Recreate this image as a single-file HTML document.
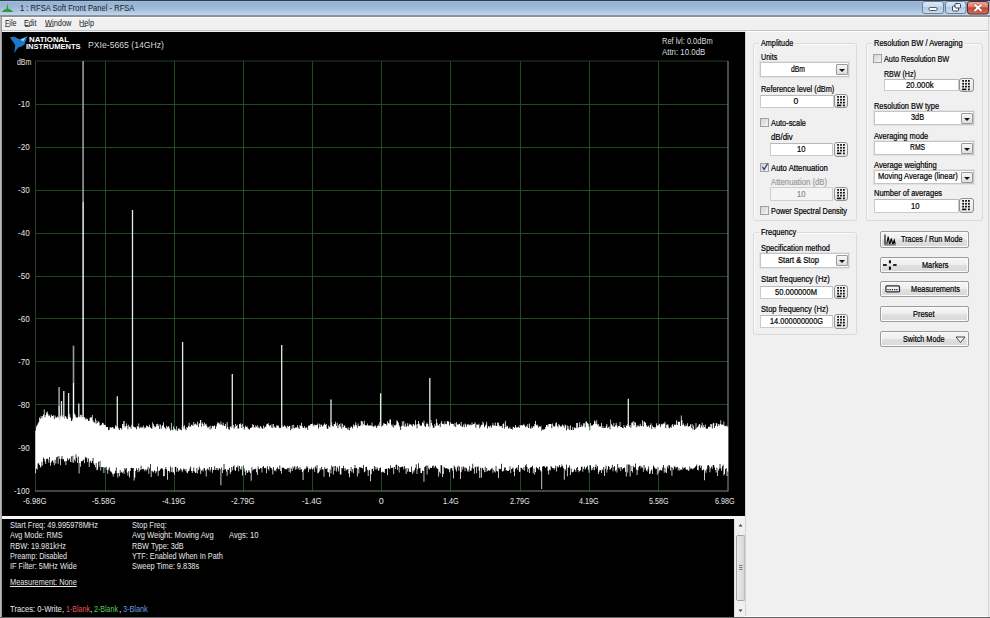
<!DOCTYPE html>
<html><head><meta charset="utf-8">
<style>
*{margin:0;padding:0;box-sizing:border-box}
html,body{width:990px;height:618px;overflow:hidden;background:#f0f0f0;font-family:"Liberation Sans",sans-serif;font-size:8px;color:#000;position:relative}
.a{position:absolute}
.t{position:absolute;white-space:pre;color:#000;transform-origin:0 0;-webkit-text-stroke:0.2px currentColor;z-index:2}
#title{left:0;top:0;width:990px;height:15px;background:linear-gradient(to bottom,#2c3c54 0px,#2c3c54 1px,#a6bcd4 1px,#a6bcd4 2px,#94b3d3 2px,#9cb8d6 7px,#afcae7 12px,#c2d6ec 15px)}
#tbord{left:0;top:15px;width:990px;height:2px;background:#8a9299}
#menu{left:0;top:17px;width:990px;height:13px;background:#f0f0f0;border-top:1px solid #fdfdfd}
#mline{left:0;top:30px;width:990px;height:1px;background:#c4c4c4}
#lframe{left:0;top:17px;width:2px;height:601px;background:linear-gradient(to right,#b8b8b8 0,#b8b8b8 1px,#9c9c9c 1px)}
#plot{left:2px;top:32px;width:743px;height:485px;background:#000}
#sep{left:2px;top:516.4px;width:743px;height:2.3px;background:#f4f4f4}
#info{left:2px;top:519px;width:732px;height:98px;background:#000}
#scroll{left:734px;top:519px;width:11px;height:98px;background:#f0f0f0;border-left:1px solid #e0e0e0}
#bot{left:0;top:617px;width:990px;height:1px;background:#646464}
#panel{left:745px;top:31px;width:243px;height:586px;background:#f0f0f0;border-left:1px solid #d4d4d4;border-top:1px solid #fff}
#rframe{left:988px;top:17px;width:2px;height:600px;background:linear-gradient(to right,#d6d6d6 0,#d6d6d6 1px,#ececec 1px)}
.grp{position:absolute;border:1px solid #dadada;border-radius:3px;box-shadow:inset 1px 1px 0 #fbfbfb}
.glbg{position:absolute;background:#f0f0f0}
.inp{position:absolute;background:#fff;border:1px solid #cbcbcb;border-top-color:#b8b8b8}
.inp.dis{background:#f4f4f4;border-color:#cfcfcf}
.dd{position:absolute;background:#fff;border:1px solid #c6c6c6;box-shadow:0 0 0 1px #e2e2e2}
.ddb{position:absolute;width:12px;height:11px;background:linear-gradient(#f6f6f6,#dedede);border:1px solid #9a9a9a;border-radius:1px}
.ddb:after{content:"";position:absolute;left:2.5px;top:4px;border-left:3px solid transparent;border-right:3px solid transparent;border-top:3px solid #111}
.kp{position:absolute;border:1px solid #909090;border-radius:3px;background:linear-gradient(#f8f8f8,#e4e4e4)}
.cb{position:absolute;width:9px;height:9px;border:1px solid #a0a0a0;background:linear-gradient(135deg,#d4d4d4,#f4f4f4)}
.btn{position:absolute;border:1px solid #9c9c9c;border-radius:2px;background:linear-gradient(#f6f6f6 0%,#eeeeee 48%,#e0e0e0 52%,#d8d8d8 100%);box-shadow:inset 0 0 0 1px #fbfbfb}
</style></head><body>
<div id="title" class="a">
 <svg class="a" style="left:1px;top:2px" width="13" height="11" viewBox="0 0 13 11"><path d="M0.5 10 L3.5 7.5 L5.5 7 L6.5 1.5 L7.5 7 L9.5 7.5 L12.5 10 Z" fill="#2e9a38"/></svg>
 <svg class="a" style="left:922px;top:1px" width="67" height="14" viewBox="0 0 67 14">
  <defs>
   <linearGradient id="bg1" x1="0" y1="0" x2="0" y2="1"><stop offset="0" stop-color="#dfe9f5"/><stop offset="0.45" stop-color="#c9d9ec"/><stop offset="0.5" stop-color="#b4c9e2"/><stop offset="1" stop-color="#cadcf0"/></linearGradient>
   <linearGradient id="bg2" x1="0" y1="0" x2="0" y2="1"><stop offset="0" stop-color="#eba89c"/><stop offset="0.45" stop-color="#de7d6c"/><stop offset="0.5" stop-color="#c8432e"/><stop offset="1" stop-color="#d6705a"/></linearGradient>
  </defs>
  <rect x="0.5" y="0.5" width="21" height="12" rx="2.5" fill="url(#bg1)" stroke="#6d8099"/>
  <rect x="7" y="6.5" width="8" height="3" rx="1.2" fill="#fff" stroke="#3a4658" stroke-width="0.9"/>
  <rect x="23.5" y="0.5" width="20.5" height="12" rx="2.5" fill="url(#bg1)" stroke="#6d8099"/>
  <rect x="30.5" y="5" width="6" height="5" rx="1" fill="#fff" stroke="#3a4658" stroke-width="1"/>
  <rect x="33" y="2.5" width="5.5" height="4.5" rx="1" fill="#e8eef6" stroke="#3a4658" stroke-width="1"/>
  <rect x="45.5" y="0.5" width="21" height="12.5" rx="2.5" fill="url(#bg2)" stroke="#5a2a22"/>
  <path d="M53 4 L59 9.5 M59 4 L53 9.5" stroke="#3a1a14" stroke-width="3" stroke-linecap="round" opacity="0.5"/>
  <path d="M53 4 L59 9.5 M59 4 L53 9.5" stroke="#fff" stroke-width="2" stroke-linecap="round"/>
 </svg>
</div>
<div id="tbord" class="a"></div>
<div id="menu" class="a"></div>
<div id="mline" class="a"></div>
<div id="lframe" class="a"></div>
<div id="plot" class="a"></div>
<svg class="a" style="left:0;top:0" width="990" height="618">
 <g stroke="#204a20" stroke-width="1" fill="none"><line x1="105.5" y1="61" x2="105.5" y2="491"/>
<line x1="174.5" y1="61" x2="174.5" y2="491"/>
<line x1="243.5" y1="61" x2="243.5" y2="491"/>
<line x1="312.5" y1="61" x2="312.5" y2="491"/>
<line x1="381.5" y1="61" x2="381.5" y2="491"/>
<line x1="450.5" y1="61" x2="450.5" y2="491"/>
<line x1="520.5" y1="61" x2="520.5" y2="491"/>
<line x1="589.5" y1="61" x2="589.5" y2="491"/>
<line x1="658.5" y1="61" x2="658.5" y2="491"/>
<line x1="35" y1="104.5" x2="728" y2="104.5"/>
<line x1="35" y1="147.5" x2="728" y2="147.5"/>
<line x1="35" y1="190.5" x2="728" y2="190.5"/>
<line x1="35" y1="233.5" x2="728" y2="233.5"/>
<line x1="35" y1="276.5" x2="728" y2="276.5"/>
<line x1="35" y1="318.5" x2="728" y2="318.5"/>
<line x1="35" y1="361.5" x2="728" y2="361.5"/>
<line x1="35" y1="404.5" x2="728" y2="404.5"/>
<line x1="35" y1="447.5" x2="728" y2="447.5"/></g>
 <path d="M35.5 491 V61 H728" stroke="#263c26" stroke-width="1" fill="none"/>
 <path d="M728 61 V491 H35" stroke="#7c8c7c" stroke-width="1.1" fill="none"/>
 <line x1="59.1" y1="387" x2="59.1" y2="406" stroke="#9a9a9a" stroke-width="1.6"/>
<line x1="59.1" y1="406" x2="59.1" y2="430" stroke="#fff" stroke-width="1.4"/>
<line x1="61.5" y1="401" x2="61.5" y2="430" stroke="#e8e8e8" stroke-width="1.3"/>
<line x1="63.8" y1="391" x2="63.8" y2="430" stroke="#e8e8e8" stroke-width="1.3"/>
<line x1="68.6" y1="393" x2="68.6" y2="430" stroke="#e8e8e8" stroke-width="1.3"/>
<line x1="73.5" y1="345.7" x2="73.5" y2="383" stroke="#9a9a9a" stroke-width="1.6"/>
<line x1="73.5" y1="383" x2="73.5" y2="430" stroke="#fff" stroke-width="1.4"/>
<line x1="78.8" y1="403.6" x2="78.8" y2="430" stroke="#e8e8e8" stroke-width="1.3"/>
<line x1="83.1" y1="61" x2="83.1" y2="202" stroke="#9a9a9a" stroke-width="1.6"/>
<line x1="83.1" y1="202" x2="83.1" y2="430" stroke="#fff" stroke-width="1.4"/>
<line x1="117.3" y1="396.3" x2="117.3" y2="430" stroke="#e8e8e8" stroke-width="1.3"/>
<line x1="124" y1="421" x2="124" y2="430" stroke="#e8e8e8" stroke-width="1.3"/>
<line x1="132.5" y1="210" x2="132.5" y2="430" stroke="#e8e8e8" stroke-width="1.3"/>
<line x1="182.6" y1="342" x2="182.6" y2="430" stroke="#e8e8e8" stroke-width="1.3"/>
<line x1="232.3" y1="374" x2="232.3" y2="430" stroke="#e8e8e8" stroke-width="1.3"/>
<line x1="281.7" y1="345" x2="281.7" y2="430" stroke="#e8e8e8" stroke-width="1.3"/>
<line x1="331" y1="399.4" x2="331" y2="430" stroke="#e8e8e8" stroke-width="1.3"/>
<line x1="361.8" y1="421" x2="361.8" y2="430" stroke="#e8e8e8" stroke-width="1.3"/>
<line x1="380.6" y1="393.3" x2="380.6" y2="430" stroke="#e8e8e8" stroke-width="1.3"/>
<line x1="429.8" y1="378" x2="429.8" y2="430" stroke="#e8e8e8" stroke-width="1.3"/>
<line x1="628.3" y1="398.7" x2="628.3" y2="430" stroke="#e8e8e8" stroke-width="1.3"/>
<line x1="200.6" y1="420" x2="200.6" y2="430" stroke="#e8e8e8" stroke-width="1.3"/>
 <path d="M35.30,430.4 36.07,430.4 36.07,426.4 36.85,426.4 36.85,425.0 37.62,425.0 37.62,423.4 38.40,423.4 38.40,422.0 39.17,422.0 39.17,417.5 39.95,417.5 39.95,418.8 40.72,418.8 40.72,416.0 41.50,416.0 41.50,417.9 42.27,417.9 42.27,416.1 43.05,416.1 43.05,414.6 43.82,414.6 43.82,409.6 44.60,409.6 44.60,417.3 45.37,417.3 45.37,415.1 46.15,415.1 46.15,412.5 46.92,412.5 46.92,411.4 47.70,411.4 47.70,413.9 48.47,413.9 48.47,416.0 49.25,416.0 49.25,415.3 50.02,415.3 50.02,417.4 50.80,417.4 50.80,414.6 51.57,414.6 51.57,415.7 52.35,415.7 52.35,416.0 53.12,416.0 53.12,415.2 53.90,415.2 53.90,418.9 54.67,418.9 54.67,415.6 55.45,415.6 55.45,417.4 56.22,417.4 56.22,417.4 57.00,417.4 57.00,416.4 57.77,416.4 57.77,417.3 58.55,417.3 58.55,418.1 59.32,418.1 59.32,419.7 60.10,419.7 60.10,415.8 60.87,415.8 60.87,417.3 61.65,417.3 61.65,416.9 62.42,416.9 62.42,415.3 63.20,415.3 63.20,417.2 63.97,417.2 63.97,418.6 64.75,418.6 64.75,416.0 65.52,416.0 65.52,416.5 66.30,416.5 66.30,418.2 67.07,418.2 67.07,419.1 67.85,419.1 67.85,415.7 68.62,415.7 68.62,417.3 69.40,417.3 69.40,414.1 70.17,414.1 70.17,417.4 70.95,417.4 70.95,421.1 71.72,421.1 71.72,420.5 72.50,420.5 72.50,418.4 73.27,418.4 73.27,419.7 74.05,419.7 74.05,413.5 74.82,413.5 74.82,414.8 75.60,414.8 75.60,416.7 76.37,416.7 76.37,417.7 77.15,417.7 77.15,417.4 77.92,417.4 77.92,416.6 78.70,416.6 78.70,416.8 79.47,416.8 79.47,417.0 80.25,417.0 80.25,414.8 81.02,414.8 81.02,415.1 81.80,415.1 81.80,417.5 82.57,417.5 82.57,417.1 83.35,417.1 83.35,416.9 84.12,416.9 84.12,417.2 84.90,417.2 84.90,419.6 85.67,419.6 85.67,418.0 86.45,418.0 86.45,419.3 87.22,419.3 87.22,419.1 88.00,419.1 88.00,420.9 88.77,420.9 88.77,420.8 89.55,420.8 89.55,418.2 90.32,418.2 90.32,417.0 91.10,417.0 91.10,417.4 91.87,417.4 91.87,414.9 92.65,414.9 92.65,420.5 93.42,420.5 93.42,422.3 94.20,422.3 94.20,422.6 94.97,422.6 94.97,418.6 95.75,418.6 95.75,423.7 96.52,423.7 96.52,420.6 97.30,420.6 97.30,423.0 98.07,423.0 98.07,421.3 98.85,421.3 98.85,422.3 99.62,422.3 99.62,425.8 100.40,425.8 100.40,424.9 101.17,424.9 101.17,424.7 101.95,424.7 101.95,423.0 102.72,423.0 102.72,422.8 103.50,422.8 103.50,424.6 104.27,424.6 104.27,424.9 105.05,424.9 105.05,424.9 105.82,424.9 105.82,427.0 106.60,427.0 106.60,427.0 107.37,427.0 107.37,426.9 108.15,426.9 108.15,430.2 108.92,430.2 108.92,429.7 109.70,429.7 109.70,426.9 110.47,426.9 110.47,427.8 111.25,427.8 111.25,427.5 112.02,427.5 112.02,426.9 112.80,426.9 112.80,427.4 113.57,427.4 113.57,428.8 114.35,428.8 114.35,428.6 115.12,428.6 115.12,425.3 115.90,425.3 115.90,426.6 116.67,426.6 116.67,426.6 117.45,426.6 117.45,426.7 118.22,426.7 118.22,428.5 119.00,428.5 119.00,429.9 119.77,429.9 119.77,428.0 120.55,428.0 120.55,427.9 121.32,427.9 121.32,429.4 122.10,429.4 122.10,423.9 122.87,423.9 122.87,423.9 123.65,423.9 123.65,426.2 124.42,426.2 124.42,427.5 125.20,427.5 125.20,426.2 125.97,426.2 125.97,423.4 126.75,423.4 126.75,425.7 127.52,425.7 127.52,429.3 128.30,429.3 128.30,424.7 129.07,424.7 129.07,426.8 129.85,426.8 129.85,426.8 130.62,426.8 130.62,428.7 131.40,428.7 131.40,424.7 132.17,424.7 132.17,427.3 132.95,427.3 132.95,426.3 133.72,426.3 133.72,426.9 134.50,426.9 134.50,427.2 135.27,427.2 135.27,427.6 136.05,427.6 136.05,429.2 136.82,429.2 136.82,426.1 137.60,426.1 137.60,427.1 138.37,427.1 138.37,423.6 139.15,423.6 139.15,428.3 139.92,428.3 139.92,426.8 140.70,426.8 140.70,428.2 141.47,428.2 141.47,426.7 142.25,426.7 142.25,427.5 143.02,427.5 143.02,425.4 143.80,425.4 143.80,428.4 144.57,428.4 144.57,427.0 145.35,427.0 145.35,427.9 146.12,427.9 146.12,425.5 146.90,425.5 146.90,425.9 147.67,425.9 147.67,426.4 148.45,426.4 148.45,427.2 149.22,427.2 149.22,424.8 150.00,424.8 150.00,427.3 150.77,427.3 150.77,428.2 151.55,428.2 151.55,428.8 152.32,428.8 152.32,422.2 153.10,422.2 153.10,424.2 153.87,424.2 153.87,425.9 154.65,425.9 154.65,427.4 155.42,427.4 155.42,426.6 156.20,426.6 156.20,424.2 156.97,424.2 156.97,423.8 157.75,423.8 157.75,425.9 158.52,425.9 158.52,424.2 159.30,424.2 159.30,429.0 160.07,429.0 160.07,424.5 160.85,424.5 160.85,428.7 161.62,428.7 161.62,426.3 162.40,426.3 162.40,425.1 163.17,425.1 163.17,422.3 163.95,422.3 163.95,426.9 164.72,426.9 164.72,427.9 165.50,427.9 165.50,429.3 166.27,429.3 166.27,425.8 167.05,425.8 167.05,427.2 167.82,427.2 167.82,426.2 168.60,426.2 168.60,426.6 169.37,426.6 169.37,428.7 170.15,428.7 170.15,430.5 170.92,430.5 170.92,423.0 171.70,423.0 171.70,430.3 172.47,430.3 172.47,429.7 173.25,429.7 173.25,426.2 174.02,426.2 174.02,428.3 174.80,428.3 174.80,429.2 175.57,429.2 175.57,430.2 176.35,430.2 176.35,426.2 177.12,426.2 177.12,431.1 177.90,431.1 177.90,429.1 178.67,429.1 178.67,428.0 179.45,428.0 179.45,429.6 180.22,429.6 180.22,429.7 181.00,429.7 181.00,430.2 181.77,430.2 181.77,426.5 182.55,426.5 182.55,428.7 183.32,428.7 183.32,426.6 184.10,426.6 184.10,425.2 184.87,425.2 184.87,428.8 185.65,428.8 185.65,430.2 186.42,430.2 186.42,427.0 187.20,427.0 187.20,427.8 187.97,427.8 187.97,426.1 188.75,426.1 188.75,422.7 189.52,422.7 189.52,427.0 190.30,427.0 190.30,426.5 191.07,426.5 191.07,424.7 191.85,424.7 191.85,424.8 192.62,424.8 192.62,425.9 193.40,425.9 193.40,422.0 194.17,422.0 194.17,424.4 194.95,424.4 194.95,423.4 195.72,423.4 195.72,424.2 196.50,424.2 196.50,425.2 197.27,425.2 197.27,421.7 198.05,421.7 198.05,427.1 198.82,427.1 198.82,423.6 199.60,423.6 199.60,423.3 200.37,423.3 200.37,423.5 201.15,423.5 201.15,426.8 201.92,426.8 201.92,422.6 202.70,422.6 202.70,424.0 203.47,424.0 203.47,426.0 204.25,426.0 204.25,422.4 205.02,422.4 205.02,424.4 205.80,424.4 205.80,423.8 206.57,423.8 206.57,426.0 207.35,426.0 207.35,427.8 208.12,427.8 208.12,427.3 208.90,427.3 208.90,426.3 209.67,426.3 209.67,429.4 210.45,429.4 210.45,425.7 211.22,425.7 211.22,428.6 212.00,428.6 212.00,425.8 212.77,425.8 212.77,426.4 213.55,426.4 213.55,426.1 214.32,426.1 214.32,425.3 215.10,425.3 215.10,428.9 215.87,428.9 215.87,426.4 216.65,426.4 216.65,424.3 217.42,424.3 217.42,422.1 218.20,422.1 218.20,423.1 218.97,423.1 218.97,423.5 219.75,423.5 219.75,424.7 220.52,424.7 220.52,421.6 221.30,421.6 221.30,424.4 222.07,424.4 222.07,425.2 222.85,425.2 222.85,422.7 223.62,422.7 223.62,425.8 224.40,425.8 224.40,425.9 225.17,425.9 225.17,424.0 225.95,424.0 225.95,428.5 226.72,428.5 226.72,422.0 227.50,422.0 227.50,426.7 228.27,426.7 228.27,429.2 229.05,429.2 229.05,429.8 229.82,429.8 229.82,426.7 230.60,426.7 230.60,426.3 231.37,426.3 231.37,427.7 232.15,427.7 232.15,428.0 232.92,428.0 232.92,424.9 233.70,424.9 233.70,428.8 234.47,428.8 234.47,427.1 235.25,427.1 235.25,424.0 236.02,424.0 236.02,426.0 236.80,426.0 236.80,424.7 237.57,424.7 237.57,428.5 238.35,428.5 238.35,428.5 239.12,428.5 239.12,424.1 239.90,424.1 239.90,423.2 240.67,423.2 240.67,424.5 241.45,424.5 241.45,428.0 242.22,428.0 242.22,423.7 243.00,423.7 243.00,426.6 243.77,426.6 243.77,429.6 244.55,429.6 244.55,427.6 245.32,427.6 245.32,425.4 246.10,425.4 246.10,427.1 246.87,427.1 246.87,426.6 247.65,426.6 247.65,428.2 248.42,428.2 248.42,429.2 249.20,429.2 249.20,429.4 249.97,429.4 249.97,428.1 250.75,428.1 250.75,427.8 251.52,427.8 251.52,427.3 252.30,427.3 252.30,424.1 253.07,424.1 253.07,425.1 253.85,425.1 253.85,427.5 254.62,427.5 254.62,427.6 255.40,427.6 255.40,425.6 256.17,425.6 256.17,426.8 256.95,426.8 256.95,425.3 257.72,425.3 257.72,428.1 258.50,428.1 258.50,426.5 259.27,426.5 259.27,428.4 260.05,428.4 260.05,426.0 260.82,426.0 260.82,426.9 261.60,426.9 261.60,428.2 262.37,428.2 262.37,428.9 263.15,428.9 263.15,425.6 263.92,425.6 263.92,428.1 264.70,428.1 264.70,426.5 265.47,426.5 265.47,426.8 266.25,426.8 266.25,424.2 267.02,424.2 267.02,424.0 267.80,424.0 267.80,423.0 268.57,423.0 268.57,425.0 269.35,425.0 269.35,426.3 270.12,426.3 270.12,425.1 270.90,425.1 270.90,427.4 271.67,427.4 271.67,424.3 272.45,424.3 272.45,427.9 273.22,427.9 273.22,424.0 274.00,424.0 274.00,426.6 274.77,426.6 274.77,427.5 275.55,427.5 275.55,427.8 276.32,427.8 276.32,425.3 277.10,425.3 277.10,425.7 277.87,425.7 277.87,425.2 278.65,425.2 278.65,427.2 279.42,427.2 279.42,428.2 280.20,428.2 280.20,427.8 280.97,427.8 280.97,428.4 281.75,428.4 281.75,425.6 282.52,425.6 282.52,426.9 283.30,426.9 283.30,426.4 284.07,426.4 284.07,425.2 284.85,425.2 284.85,426.3 285.62,426.3 285.62,426.8 286.40,426.8 286.40,428.4 287.17,428.4 287.17,425.8 287.95,425.8 287.95,426.9 288.72,426.9 288.72,425.7 289.50,425.7 289.50,425.9 290.27,425.9 290.27,430.2 291.05,430.2 291.05,428.8 291.82,428.8 291.82,424.9 292.60,424.9 292.60,428.6 293.37,428.6 293.37,424.8 294.15,424.8 294.15,428.3 294.92,428.3 294.92,427.7 295.70,427.7 295.70,427.2 296.47,427.2 296.47,427.7 297.25,427.7 297.25,425.3 298.02,425.3 298.02,427.6 298.80,427.6 298.80,428.9 299.57,428.9 299.57,425.1 300.35,425.1 300.35,426.0 301.12,426.0 301.12,422.7 301.90,422.7 301.90,426.3 302.67,426.3 302.67,427.7 303.45,427.7 303.45,427.9 304.22,427.9 304.22,426.1 305.00,426.1 305.00,428.3 305.77,428.3 305.77,427.2 306.55,427.2 306.55,427.6 307.32,427.6 307.32,429.8 308.10,429.8 308.10,425.4 308.87,425.4 308.87,425.7 309.65,425.7 309.65,425.2 310.42,425.2 310.42,424.0 311.20,424.0 311.20,423.9 311.97,423.9 311.97,423.6 312.75,423.6 312.75,424.8 313.52,424.8 313.52,426.5 314.30,426.5 314.30,424.6 315.07,424.6 315.07,425.0 315.85,425.0 315.85,425.3 316.62,425.3 316.62,424.7 317.40,424.7 317.40,423.5 318.17,423.5 318.17,428.4 318.95,428.4 318.95,423.7 319.72,423.7 319.72,427.0 320.50,427.0 320.50,424.4 321.27,424.4 321.27,424.7 322.05,424.7 322.05,426.8 322.82,426.8 322.82,425.5 323.60,425.5 323.60,424.6 324.37,424.6 324.37,423.3 325.15,423.3 325.15,424.7 325.92,424.7 325.92,424.1 326.70,424.1 326.70,428.4 327.47,428.4 327.47,429.1 328.25,429.1 328.25,425.6 329.02,425.6 329.02,426.7 329.80,426.7 329.80,427.5 330.57,427.5 330.57,424.9 331.35,424.9 331.35,422.3 332.12,422.3 332.12,426.0 332.90,426.0 332.90,426.5 333.67,426.5 333.67,424.1 334.45,424.1 334.45,424.3 335.22,424.3 335.22,421.7 336.00,421.7 336.00,425.8 336.77,425.8 336.77,422.8 337.55,422.8 337.55,428.2 338.32,428.2 338.32,425.2 339.10,425.2 339.10,424.0 339.87,424.0 339.87,427.1 340.65,427.1 340.65,423.3 341.42,423.3 341.42,428.7 342.20,428.7 342.20,423.7 342.97,423.7 342.97,427.3 343.75,427.3 343.75,425.0 344.52,425.0 344.52,426.0 345.30,426.0 345.30,428.0 346.07,428.0 346.07,427.8 346.85,427.8 346.85,428.4 347.62,428.4 347.62,429.7 348.40,429.7 348.40,427.2 349.17,427.2 349.17,430.3 349.95,430.3 349.95,427.8 350.72,427.8 350.72,426.2 351.50,426.2 351.50,427.0 352.27,427.0 352.27,428.6 353.05,428.6 353.05,424.6 353.82,424.6 353.82,426.6 354.60,426.6 354.60,425.1 355.37,425.1 355.37,422.2 356.15,422.2 356.15,425.3 356.92,425.3 356.92,427.8 357.70,427.8 357.70,423.5 358.47,423.5 358.47,425.9 359.25,425.9 359.25,426.2 360.02,426.2 360.02,425.5 360.80,425.5 360.80,420.9 361.57,420.9 361.57,425.8 362.35,425.8 362.35,422.2 363.12,422.2 363.12,424.3 363.90,424.3 363.90,420.8 364.67,420.8 364.67,424.9 365.45,424.9 365.45,425.6 366.22,425.6 366.22,425.2 367.00,425.2 367.00,423.6 367.77,423.6 367.77,425.8 368.55,425.8 368.55,425.2 369.32,425.2 369.32,425.7 370.10,425.7 370.10,425.3 370.87,425.3 370.87,425.8 371.65,425.8 371.65,422.5 372.42,422.5 372.42,426.3 373.20,426.3 373.20,426.8 373.97,426.8 373.97,426.3 374.75,426.3 374.75,424.9 375.52,424.9 375.52,426.4 376.30,426.4 376.30,427.9 377.07,427.9 377.07,425.9 377.85,425.9 377.85,424.4 378.62,424.4 378.62,426.1 379.40,426.1 379.40,422.3 380.17,422.3 380.17,425.9 380.95,425.9 380.95,427.0 381.72,427.0 381.72,425.7 382.50,425.7 382.50,425.6 383.27,425.6 383.27,423.3 384.05,423.3 384.05,423.6 384.82,423.6 384.82,423.9 385.60,423.9 385.60,423.9 386.37,423.9 386.37,425.6 387.15,425.6 387.15,421.3 387.92,421.3 387.92,423.1 388.70,423.1 388.70,423.4 389.47,423.4 389.47,419.4 390.25,419.4 390.25,419.5 391.02,419.5 391.02,424.8 391.80,424.8 391.80,426.7 392.57,426.7 392.57,424.4 393.35,424.4 393.35,427.6 394.12,427.6 394.12,425.0 394.90,425.0 394.90,425.8 395.67,425.8 395.67,424.5 396.45,424.5 396.45,420.3 397.22,420.3 397.22,421.2 398.00,421.2 398.00,422.6 398.77,422.6 398.77,425.2 399.55,425.2 399.55,426.9 400.32,426.9 400.32,430.1 401.10,430.1 401.10,425.9 401.87,425.9 401.87,421.4 402.65,421.4 402.65,425.8 403.42,425.8 403.42,421.0 404.20,421.0 404.20,426.6 404.97,426.6 404.97,423.5 405.75,423.5 405.75,426.7 406.52,426.7 406.52,426.2 407.30,426.2 407.30,423.3 408.07,423.3 408.07,426.2 408.85,426.2 408.85,423.8 409.62,423.8 409.62,425.1 410.40,425.1 410.40,424.0 411.17,424.0 411.17,425.2 411.95,425.2 411.95,426.6 412.72,426.6 412.72,423.9 413.50,423.9 413.50,424.6 414.27,424.6 414.27,425.6 415.05,425.6 415.05,420.2 415.82,420.2 415.82,424.5 416.60,424.5 416.60,428.2 417.37,428.2 417.37,423.9 418.15,423.9 418.15,421.1 418.92,421.1 418.92,423.7 419.70,423.7 419.70,425.3 420.47,425.3 420.47,426.1 421.25,426.1 421.25,425.5 422.02,425.5 422.02,422.3 422.80,422.3 422.80,423.3 423.57,423.3 423.57,420.4 424.35,420.4 424.35,426.0 425.12,426.0 425.12,427.0 425.90,427.0 425.90,424.2 426.67,424.2 426.67,422.5 427.45,422.5 427.45,424.0 428.22,424.0 428.22,426.4 429.00,426.4 429.00,428.7 429.77,428.7 429.77,426.6 430.55,426.6 430.55,420.1 431.32,420.1 431.32,422.9 432.10,422.9 432.10,425.5 432.87,425.5 432.87,428.0 433.65,428.0 433.65,427.6 434.42,427.6 434.42,424.1 435.20,424.1 435.20,425.9 435.97,425.9 435.97,419.0 436.75,419.0 436.75,423.1 437.52,423.1 437.52,425.2 438.30,425.2 438.30,425.4 439.07,425.4 439.07,423.9 439.85,423.9 439.85,426.9 440.62,426.9 440.62,422.7 441.40,422.7 441.40,420.8 442.17,420.8 442.17,424.1 442.95,424.1 442.95,423.8 443.72,423.8 443.72,424.6 444.50,424.6 444.50,421.6 445.27,421.6 445.27,424.0 446.05,424.0 446.05,424.2 446.82,424.2 446.82,421.2 447.60,421.2 447.60,421.1 448.37,421.1 448.37,421.8 449.15,421.8 449.15,425.5 449.92,425.5 449.92,422.2 450.70,422.2 450.70,423.4 451.47,423.4 451.47,424.0 452.25,424.0 452.25,423.7 453.02,423.7 453.02,423.9 453.80,423.9 453.80,426.3 454.57,426.3 454.57,422.9 455.35,422.9 455.35,427.1 456.12,427.1 456.12,422.3 456.90,422.3 456.90,424.2 457.67,424.2 457.67,424.9 458.45,424.9 458.45,424.0 459.22,424.0 459.22,423.8 460.00,423.8 460.00,425.8 460.77,425.8 460.77,422.0 461.55,422.0 461.55,426.5 462.32,426.5 462.32,426.8 463.10,426.8 463.10,424.6 463.87,424.6 463.87,427.3 464.65,427.3 464.65,423.5 465.42,423.5 465.42,424.6 466.20,424.6 466.20,426.7 466.97,426.7 466.97,424.2 467.75,424.2 467.75,425.1 468.52,425.1 468.52,423.9 469.30,423.9 469.30,425.5 470.07,425.5 470.07,424.6 470.85,424.6 470.85,425.2 471.62,425.2 471.62,422.6 472.40,422.6 472.40,424.8 473.17,424.8 473.17,423.9 473.95,423.9 473.95,423.8 474.72,423.8 474.72,422.2 475.50,422.2 475.50,427.7 476.27,427.7 476.27,424.5 477.05,424.5 477.05,424.6 477.82,424.6 477.82,425.1 478.60,425.1 478.60,423.8 479.37,423.8 479.37,428.2 480.15,428.2 480.15,426.6 480.92,426.6 480.92,424.8 481.70,424.8 481.70,424.9 482.47,424.9 482.47,421.4 483.25,421.4 483.25,423.3 484.02,423.3 484.02,427.3 484.80,427.3 484.80,425.8 485.57,425.8 485.57,424.5 486.35,424.5 486.35,421.7 487.12,421.7 487.12,428.6 487.90,428.6 487.90,426.3 488.67,426.3 488.67,425.9 489.45,425.9 489.45,427.4 490.22,427.4 490.22,425.5 491.00,425.5 491.00,427.5 491.77,427.5 491.77,425.2 492.55,425.2 492.55,422.9 493.32,422.9 493.32,425.6 494.10,425.6 494.10,425.5 494.87,425.5 494.87,422.4 495.65,422.4 495.65,426.1 496.42,426.1 496.42,426.1 497.20,426.1 497.20,422.4 497.97,422.4 497.97,422.7 498.75,422.7 498.75,424.9 499.52,424.9 499.52,426.8 500.30,426.8 500.30,425.9 501.07,425.9 501.07,425.9 501.85,425.9 501.85,427.9 502.62,427.9 502.62,424.1 503.40,424.1 503.40,423.3 504.17,423.3 504.17,428.6 504.95,428.6 504.95,420.8 505.72,420.8 505.72,426.9 506.50,426.9 506.50,425.5 507.27,425.5 507.27,426.2 508.05,426.2 508.05,428.5 508.82,428.5 508.82,428.3 509.60,428.3 509.60,426.7 510.37,426.7 510.37,429.1 511.15,429.1 511.15,428.7 511.92,428.7 511.92,429.4 512.70,429.4 512.70,426.7 513.47,426.7 513.47,427.1 514.25,427.1 514.25,428.1 515.02,428.1 515.02,425.0 515.80,425.0 515.80,426.9 516.57,426.9 516.57,428.0 517.35,428.0 517.35,427.0 518.12,427.0 518.12,426.4 518.90,426.4 518.90,428.1 519.67,428.1 519.67,425.1 520.45,425.1 520.45,425.8 521.22,425.8 521.22,424.9 522.00,424.9 522.00,425.5 522.77,425.5 522.77,425.1 523.55,425.1 523.55,423.7 524.32,423.7 524.32,425.4 525.10,425.4 525.10,427.2 525.87,427.2 525.87,425.8 526.65,425.8 526.65,426.8 527.42,426.8 527.42,424.0 528.20,424.0 528.20,428.0 528.97,428.0 528.97,423.6 529.75,423.6 529.75,428.0 530.52,428.0 530.52,429.0 531.30,429.0 531.30,426.5 532.07,426.5 532.07,428.1 532.85,428.1 532.85,426.2 533.62,426.2 533.62,426.5 534.40,426.5 534.40,424.1 535.17,424.1 535.17,420.9 535.95,420.9 535.95,425.2 536.72,425.2 536.72,424.5 537.50,424.5 537.50,425.7 538.27,425.7 538.27,427.7 539.05,427.7 539.05,426.2 539.82,426.2 539.82,427.0 540.60,427.0 540.60,425.9 541.37,425.9 541.37,430.7 542.15,430.7 542.15,429.6 542.92,429.6 542.92,429.4 543.70,429.4 543.70,429.4 544.47,429.4 544.47,429.0 545.25,429.0 545.25,426.9 546.02,426.9 546.02,425.1 546.80,425.1 546.80,425.1 547.57,425.1 547.57,426.6 548.35,426.6 548.35,424.0 549.12,424.0 549.12,424.1 549.90,424.1 549.90,424.1 550.67,424.1 550.67,424.1 551.45,424.1 551.45,428.2 552.22,428.2 552.22,423.4 553.00,423.4 553.00,425.8 553.77,425.8 553.77,426.7 554.55,426.7 554.55,426.3 555.32,426.3 555.32,423.3 556.10,423.3 556.10,422.3 556.87,422.3 556.87,425.8 557.65,425.8 557.65,427.5 558.42,427.5 558.42,424.1 559.20,424.1 559.20,425.3 559.97,425.3 559.97,426.2 560.75,426.2 560.75,426.9 561.52,426.9 561.52,425.4 562.30,425.4 562.30,424.5 563.07,424.5 563.07,425.8 563.85,425.8 563.85,427.8 564.62,427.8 564.62,424.6 565.40,424.6 565.40,425.3 566.17,425.3 566.17,430.6 566.95,430.6 566.95,425.6 567.72,425.6 567.72,428.9 568.50,428.9 568.50,426.3 569.27,426.3 569.27,430.1 570.05,430.1 570.05,425.6 570.82,425.6 570.82,430.0 571.60,430.0 571.60,430.1 572.37,430.1 572.37,427.0 573.15,427.0 573.15,430.0 573.92,430.0 573.92,427.7 574.70,427.7 574.70,427.6 575.47,427.6 575.47,428.6 576.25,428.6 576.25,423.1 577.02,423.1 577.02,423.0 577.80,423.0 577.80,427.9 578.57,427.9 578.57,426.9 579.35,426.9 579.35,422.3 580.12,422.3 580.12,427.1 580.90,427.1 580.90,424.8 581.67,424.8 581.67,427.1 582.45,427.1 582.45,425.7 583.22,425.7 583.22,423.3 584.00,423.3 584.00,423.3 584.77,423.3 584.77,427.3 585.55,427.3 585.55,421.6 586.32,421.6 586.32,421.5 587.10,421.5 587.10,423.0 587.87,423.0 587.87,423.9 588.65,423.9 588.65,426.4 589.42,426.4 589.42,430.3 590.20,430.3 590.20,423.0 590.97,423.0 590.97,425.5 591.75,425.5 591.75,425.8 592.52,425.8 592.52,425.1 593.30,425.1 593.30,423.9 594.07,423.9 594.07,420.4 594.85,420.4 594.85,421.5 595.62,421.5 595.62,424.1 596.40,424.1 596.40,420.3 597.17,420.3 597.17,424.8 597.95,424.8 597.95,424.1 598.72,424.1 598.72,426.5 599.50,426.5 599.50,426.2 600.27,426.2 600.27,426.4 601.05,426.4 601.05,423.0 601.82,423.0 601.82,427.9 602.60,427.9 602.60,425.9 603.37,425.9 603.37,428.0 604.15,428.0 604.15,427.8 604.92,427.8 604.92,427.9 605.70,427.9 605.70,426.0 606.47,426.0 606.47,424.0 607.25,424.0 607.25,428.1 608.02,428.1 608.02,427.2 608.80,427.2 608.80,426.6 609.57,426.6 609.57,429.2 610.35,429.2 610.35,419.5 611.12,419.5 611.12,424.3 611.90,424.3 611.90,425.4 612.67,425.4 612.67,426.4 613.45,426.4 613.45,423.0 614.22,423.0 614.22,427.0 615.00,427.0 615.00,425.6 615.77,425.6 615.77,422.7 616.55,422.7 616.55,425.3 617.32,425.3 617.32,427.4 618.10,427.4 618.10,426.1 618.87,426.1 618.87,426.1 619.65,426.1 619.65,422.0 620.42,422.0 620.42,427.0 621.20,427.0 621.20,426.9 621.97,426.9 621.97,428.1 622.75,428.1 622.75,428.3 623.52,428.3 623.52,424.9 624.30,424.9 624.30,427.1 625.07,427.1 625.07,427.7 625.85,427.7 625.85,425.2 626.62,425.2 626.62,426.0 627.40,426.0 627.40,424.1 628.17,424.1 628.17,425.8 628.95,425.8 628.95,426.7 629.72,426.7 629.72,425.1 630.50,425.1 630.50,427.7 631.27,427.7 631.27,422.8 632.05,422.8 632.05,422.4 632.82,422.4 632.82,421.1 633.60,421.1 633.60,425.5 634.37,425.5 634.37,422.1 635.15,422.1 635.15,422.6 635.92,422.6 635.92,427.2 636.70,427.2 636.70,425.0 637.47,425.0 637.47,426.4 638.25,426.4 638.25,425.4 639.02,425.4 639.02,426.6 639.80,426.6 639.80,423.8 640.57,423.8 640.57,425.8 641.35,425.8 641.35,426.3 642.12,426.3 642.12,420.3 642.90,420.3 642.90,426.5 643.67,426.5 643.67,421.2 644.45,421.2 644.45,421.9 645.22,421.9 645.22,422.8 646.00,422.8 646.00,424.9 646.77,424.9 646.77,427.1 647.55,427.1 647.55,426.3 648.32,426.3 648.32,425.5 649.10,425.5 649.10,427.5 649.87,427.5 649.87,425.1 650.65,425.1 650.65,423.3 651.42,423.3 651.42,428.9 652.20,428.9 652.20,425.5 652.97,425.5 652.97,427.3 653.75,427.3 653.75,426.9 654.52,426.9 654.52,428.4 655.30,428.4 655.30,427.0 656.07,427.0 656.07,423.2 656.85,423.2 656.85,425.4 657.62,425.4 657.62,425.6 658.40,425.6 658.40,424.7 659.17,424.7 659.17,423.7 659.95,423.7 659.95,427.1 660.72,427.1 660.72,424.6 661.50,424.6 661.50,423.7 662.27,423.7 662.27,424.5 663.05,424.5 663.05,423.5 663.82,423.5 663.82,423.5 664.60,423.5 664.60,421.7 665.37,421.7 665.37,428.0 666.15,428.0 666.15,424.7 666.92,424.7 666.92,424.5 667.70,424.5 667.70,424.5 668.47,424.5 668.47,427.6 669.25,427.6 669.25,428.3 670.02,428.3 670.02,426.7 670.80,426.7 670.80,427.9 671.57,427.9 671.57,425.3 672.35,425.3 672.35,423.9 673.12,423.9 673.12,426.4 673.90,426.4 673.90,424.6 674.67,424.6 674.67,425.1 675.45,425.1 675.45,424.4 676.22,424.4 676.22,420.2 677.00,420.2 677.00,425.0 677.77,425.0 677.77,421.4 678.55,421.4 678.55,422.1 679.32,422.1 679.32,421.7 680.10,421.7 680.10,426.1 680.87,426.1 680.87,415.5 681.65,415.5 681.65,420.2 682.42,420.2 682.42,424.9 683.20,424.9 683.20,423.6 683.97,423.6 683.97,425.8 684.75,425.8 684.75,426.4 685.52,426.4 685.52,424.4 686.30,424.4 686.30,426.1 687.07,426.1 687.07,423.2 687.85,423.2 687.85,426.7 688.62,426.7 688.62,426.3 689.40,426.3 689.40,426.0 690.17,426.0 690.17,424.3 690.95,424.3 690.95,428.1 691.72,428.1 691.72,423.9 692.50,423.9 692.50,429.4 693.27,429.4 693.27,425.6 694.05,425.6 694.05,430.1 694.82,430.1 694.82,429.0 695.60,429.0 695.60,423.1 696.37,423.1 696.37,428.3 697.15,428.3 697.15,427.1 697.92,427.1 697.92,426.2 698.70,426.2 698.70,424.6 699.47,424.6 699.47,424.1 700.25,424.1 700.25,427.7 701.02,427.7 701.02,425.4 701.80,425.4 701.80,422.5 702.57,422.5 702.57,427.4 703.35,427.4 703.35,425.0 704.12,425.0 704.12,427.0 704.90,427.0 704.90,424.4 705.67,424.4 705.67,428.3 706.45,428.3 706.45,429.0 707.22,429.0 707.22,428.6 708.00,428.6 708.00,427.0 708.77,427.0 708.77,426.4 709.55,426.4 709.55,427.3 710.32,427.3 710.32,423.9 711.10,423.9 711.10,424.2 711.87,424.2 711.87,428.6 712.65,428.6 712.65,423.5 713.42,423.5 713.42,422.8 714.20,422.8 714.20,427.9 714.97,427.9 714.97,426.1 715.75,426.1 715.75,422.9 716.52,422.9 716.52,423.6 717.30,423.6 717.30,426.6 718.07,426.6 718.07,423.9 718.85,423.9 718.85,425.4 719.62,425.4 719.62,424.0 720.40,424.0 720.40,420.3 721.17,420.3 721.17,424.7 721.95,424.7 721.95,424.3 722.72,424.3 722.72,425.1 723.50,425.1 723.50,421.5 724.27,421.5 724.27,426.1 725.05,426.1 725.05,426.2 725.82,426.2 725.82,425.3 726.60,425.3 726.60,426.5 727.37,426.5 727.37,426.4 728.15,426.4 728.15,471.4 727.37,471.4 727.37,475.9 726.60,475.9 726.60,467.9 725.82,467.9 725.82,469.0 725.05,469.0 725.05,474.1 724.27,474.1 724.27,475.5 723.50,475.5 723.50,464.7 722.72,464.7 722.72,466.5 721.95,466.5 721.95,470.7 721.17,470.7 721.17,468.5 720.40,468.5 720.40,464.1 719.62,464.1 719.62,468.4 718.85,468.4 718.85,470.6 718.07,470.6 718.07,475.9 717.30,475.9 717.30,467.8 716.52,467.8 716.52,472.5 715.75,472.5 715.75,470.1 714.97,470.1 714.97,467.5 714.20,467.5 714.20,464.9 713.42,464.9 713.42,465.2 712.65,465.2 712.65,468.8 711.87,468.8 711.87,466.5 711.10,466.5 711.10,468.3 710.32,468.3 710.32,472.3 709.55,472.3 709.55,466.4 708.77,466.4 708.77,465.0 708.00,465.0 708.00,465.5 707.22,465.5 707.22,468.9 706.45,468.9 706.45,472.7 705.67,472.7 705.67,470.5 704.90,470.5 704.90,480.2 704.12,480.2 704.12,469.3 703.35,469.3 703.35,469.9 702.57,469.9 702.57,470.6 701.80,470.6 701.80,465.7 701.02,465.7 701.02,468.1 700.25,468.1 700.25,465.2 699.47,465.2 699.47,465.8 698.70,465.8 698.70,470.2 697.92,470.2 697.92,470.1 697.15,470.1 697.15,464.4 696.37,464.4 696.37,466.0 695.60,466.0 695.60,467.1 694.82,467.1 694.82,468.0 694.05,468.0 694.05,468.2 693.27,468.2 693.27,469.4 692.50,469.4 692.50,468.6 691.72,468.6 691.72,468.6 690.95,468.6 690.95,468.8 690.17,468.8 690.17,466.4 689.40,466.4 689.40,470.6 688.62,470.6 688.62,470.8 687.85,470.8 687.85,469.6 687.07,469.6 687.07,469.7 686.30,469.7 686.30,469.3 685.52,469.3 685.52,467.1 684.75,467.1 684.75,467.9 683.97,467.9 683.97,468.5 683.20,468.5 683.20,466.9 682.42,466.9 682.42,470.0 681.65,470.0 681.65,469.3 680.87,469.3 680.87,469.8 680.10,469.8 680.10,470.6 679.32,470.6 679.32,468.2 678.55,468.2 678.55,470.4 677.77,470.4 677.77,466.7 677.00,466.7 677.00,467.2 676.22,467.2 676.22,468.4 675.45,468.4 675.45,466.4 674.67,466.4 674.67,466.4 673.90,466.4 673.90,469.7 673.12,469.7 673.12,467.8 672.35,467.8 672.35,475.7 671.57,475.7 671.57,467.0 670.80,467.0 670.80,470.4 670.02,470.4 670.02,465.4 669.25,465.4 669.25,465.1 668.47,465.1 668.47,468.3 667.70,468.3 667.70,466.3 666.92,466.3 666.92,472.9 666.15,472.9 666.15,472.3 665.37,472.3 665.37,467.7 664.60,467.7 664.60,472.7 663.82,472.7 663.82,465.0 663.05,465.0 663.05,467.5 662.27,467.5 662.27,470.7 661.50,470.7 661.50,470.2 660.72,470.2 660.72,469.7 659.95,469.7 659.95,470.5 659.17,470.5 659.17,472.7 658.40,472.7 658.40,467.1 657.62,467.1 657.62,474.7 656.85,474.7 656.85,468.7 656.07,468.7 656.07,469.3 655.30,469.3 655.30,468.1 654.52,468.1 654.52,466.8 653.75,466.8 653.75,465.6 652.97,465.6 652.97,474.0 652.20,474.0 652.20,469.3 651.42,469.3 651.42,470.7 650.65,470.7 650.65,473.6 649.87,473.6 649.87,474.1 649.10,474.1 649.10,466.5 648.32,466.5 648.32,469.2 647.55,469.2 647.55,471.4 646.77,471.4 646.77,470.4 646.00,470.4 646.00,467.4 645.22,467.4 645.22,469.4 644.45,469.4 644.45,465.1 643.67,465.1 643.67,471.7 642.90,471.7 642.90,467.8 642.12,467.8 642.12,466.6 641.35,466.6 641.35,468.2 640.57,468.2 640.57,465.8 639.80,465.8 639.80,466.1 639.02,466.1 639.02,467.2 638.25,467.2 638.25,470.3 637.47,470.3 637.47,474.9 636.70,474.9 636.70,469.6 635.92,469.6 635.92,463.6 635.15,463.6 635.15,467.3 634.37,467.3 634.37,467.5 633.60,467.5 633.60,465.8 632.82,465.8 632.82,472.6 632.05,472.6 632.05,471.0 631.27,471.0 631.27,465.7 630.50,465.7 630.50,476.5 629.72,476.5 629.72,464.6 628.95,464.6 628.95,464.4 628.17,464.4 628.17,472.4 627.40,472.4 627.40,464.5 626.62,464.5 626.62,476.4 625.85,476.4 625.85,471.7 625.07,471.7 625.07,467.6 624.30,467.6 624.30,468.0 623.52,468.0 623.52,468.3 622.75,468.3 622.75,469.3 621.97,469.3 621.97,466.9 621.20,466.9 621.20,471.0 620.42,471.0 620.42,467.1 619.65,467.1 619.65,468.8 618.87,468.8 618.87,467.7 618.10,467.7 618.10,464.1 617.32,464.1 617.32,472.5 616.55,472.5 616.55,469.7 615.77,469.7 615.77,471.2 615.00,471.2 615.00,466.0 614.22,466.0 614.22,467.0 613.45,467.0 613.45,471.2 612.67,471.2 612.67,464.8 611.90,464.8 611.90,467.7 611.12,467.7 611.12,469.1 610.35,469.1 610.35,469.8 609.57,469.8 609.57,466.9 608.80,466.9 608.80,465.9 608.02,465.9 608.02,469.5 607.25,469.5 607.25,472.6 606.47,472.6 606.47,465.5 605.70,465.5 605.70,468.8 604.92,468.8 604.92,476.0 604.15,476.0 604.15,467.1 603.37,467.1 603.37,470.5 602.60,470.5 602.60,469.3 601.82,469.3 601.82,472.9 601.05,472.9 601.05,470.2 600.27,470.2 600.27,470.1 599.50,470.1 599.50,471.7 598.72,471.7 598.72,474.1 597.95,474.1 597.95,466.1 597.17,466.1 597.17,468.4 596.40,468.4 596.40,464.5 595.62,464.5 595.62,466.9 594.85,466.9 594.85,470.2 594.07,470.2 594.07,466.8 593.30,466.8 593.30,470.0 592.52,470.0 592.52,468.0 591.75,468.0 591.75,470.2 590.97,470.2 590.97,465.6 590.20,465.6 590.20,465.0 589.42,465.0 589.42,472.8 588.65,472.8 588.65,469.6 587.87,469.6 587.87,465.7 587.10,465.7 587.10,467.1 586.32,467.1 586.32,468.2 585.55,468.2 585.55,469.6 584.77,469.6 584.77,466.5 584.00,466.5 584.00,468.8 583.22,468.8 583.22,471.7 582.45,471.7 582.45,466.6 581.67,466.6 581.67,467.1 580.90,467.1 580.90,470.3 580.12,470.3 580.12,470.9 579.35,470.9 579.35,472.2 578.57,472.2 578.57,469.9 577.80,469.9 577.80,467.1 577.02,467.1 577.02,468.0 576.25,468.0 576.25,471.7 575.47,471.7 575.47,470.0 574.70,470.0 574.70,469.0 573.92,469.0 573.92,471.4 573.15,471.4 573.15,472.2 572.37,472.2 572.37,472.2 571.60,472.2 571.60,468.6 570.82,468.6 570.82,474.9 570.05,474.9 570.05,465.4 569.27,465.4 569.27,467.6 568.50,467.6 568.50,467.8 567.72,467.8 567.72,476.2 566.95,476.2 566.95,464.6 566.17,464.6 566.17,470.5 565.40,470.5 565.40,469.0 564.62,469.0 564.62,479.8 563.85,479.8 563.85,468.0 563.07,468.0 563.07,466.3 562.30,466.3 562.30,464.4 561.52,464.4 561.52,466.7 560.75,466.7 560.75,467.6 559.97,467.6 559.97,464.9 559.20,464.9 559.20,466.8 558.42,466.8 558.42,467.8 557.65,467.8 557.65,466.3 556.87,466.3 556.87,471.5 556.10,471.5 556.10,465.7 555.32,465.7 555.32,468.3 554.55,468.3 554.55,469.7 553.77,469.7 553.77,467.9 553.00,467.9 553.00,468.2 552.22,468.2 552.22,467.3 551.45,467.3 551.45,466.0 550.67,466.0 550.67,470.6 549.90,470.6 549.90,469.7 549.12,469.7 549.12,474.4 548.35,474.4 548.35,470.7 547.57,470.7 547.57,466.6 546.80,466.6 546.80,466.4 546.02,466.4 546.02,468.1 545.25,468.1 545.25,466.7 544.47,466.7 544.47,465.9 543.70,465.9 543.70,466.3 542.92,466.3 542.92,466.7 542.15,466.7 542.15,489.0 541.37,489.0 541.37,471.6 540.60,471.6 540.60,470.0 539.82,470.0 539.82,466.7 539.05,466.7 539.05,469.6 538.27,469.6 538.27,468.2 537.50,468.2 537.50,468.3 536.72,468.3 536.72,466.9 535.95,466.9 535.95,472.1 535.17,472.1 535.17,474.6 534.40,474.6 534.40,468.4 533.62,468.4 533.62,473.3 532.85,473.3 532.85,465.8 532.07,465.8 532.07,466.9 531.30,466.9 531.30,466.9 530.52,466.9 530.52,468.1 529.75,468.1 529.75,472.9 528.97,472.9 528.97,468.7 528.20,468.7 528.20,472.0 527.42,472.0 527.42,466.9 526.65,466.9 526.65,464.2 525.87,464.2 525.87,465.5 525.10,465.5 525.10,470.7 524.32,470.7 524.32,467.0 523.55,467.0 523.55,470.1 522.77,470.1 522.77,468.8 522.00,468.8 522.00,467.9 521.22,467.9 521.22,467.6 520.45,467.6 520.45,471.5 519.67,471.5 519.67,472.1 518.90,472.1 518.90,465.0 518.12,465.0 518.12,469.7 517.35,469.7 517.35,467.2 516.57,467.2 516.57,468.1 515.80,468.1 515.80,469.0 515.02,469.0 515.02,476.3 514.25,476.3 514.25,471.7 513.47,471.7 513.47,467.6 512.70,467.6 512.70,468.4 511.92,468.4 511.92,468.9 511.15,468.9 511.15,473.0 510.37,473.0 510.37,466.3 509.60,466.3 509.60,470.1 508.82,470.1 508.82,471.1 508.05,471.1 508.05,471.1 507.27,471.1 507.27,470.3 506.50,470.3 506.50,470.5 505.72,470.5 505.72,467.5 504.95,467.5 504.95,467.4 504.17,467.4 504.17,470.4 503.40,470.4 503.40,471.6 502.62,471.6 502.62,471.2 501.85,471.2 501.85,463.8 501.07,463.8 501.07,469.1 500.30,469.1 500.30,469.3 499.52,469.3 499.52,468.4 498.75,468.4 498.75,478.1 497.97,478.1 497.97,471.6 497.20,471.6 497.20,471.0 496.42,471.0 496.42,465.9 495.65,465.9 495.65,472.4 494.87,472.4 494.87,471.5 494.10,471.5 494.10,469.8 493.32,469.8 493.32,472.7 492.55,472.7 492.55,468.1 491.77,468.1 491.77,468.7 491.00,468.7 491.00,469.6 490.22,469.6 490.22,470.4 489.45,470.4 489.45,471.1 488.67,471.1 488.67,470.0 487.90,470.0 487.90,471.3 487.12,471.3 487.12,467.9 486.35,467.9 486.35,471.7 485.57,471.7 485.57,466.7 484.80,466.7 484.80,472.2 484.02,472.2 484.02,470.0 483.25,470.0 483.25,468.3 482.47,468.3 482.47,467.7 481.70,467.7 481.70,477.8 480.92,477.8 480.92,467.7 480.15,467.7 480.15,477.9 479.37,477.9 479.37,470.8 478.60,470.8 478.60,466.2 477.82,466.2 477.82,466.9 477.05,466.9 477.05,473.3 476.27,473.3 476.27,466.5 475.50,466.5 475.50,467.3 474.72,467.3 474.72,473.8 473.95,473.8 473.95,468.7 473.17,468.7 473.17,463.7 472.40,463.7 472.40,468.0 471.62,468.0 471.62,470.6 470.85,470.6 470.85,471.0 470.07,471.0 470.07,466.2 469.30,466.2 469.30,471.8 468.52,471.8 468.52,469.8 467.75,469.8 467.75,471.4 466.97,471.4 466.97,468.3 466.20,468.3 466.20,467.4 465.42,467.4 465.42,471.2 464.65,471.2 464.65,467.6 463.87,467.6 463.87,466.4 463.10,466.4 463.10,469.4 462.32,469.4 462.32,466.8 461.55,466.8 461.55,471.9 460.77,471.9 460.77,479.1 460.00,479.1 460.00,466.5 459.22,466.5 459.22,470.8 458.45,470.8 458.45,465.7 457.67,465.7 457.67,467.2 456.90,467.2 456.90,471.4 456.12,471.4 456.12,469.5 455.35,469.5 455.35,467.3 454.57,467.3 454.57,465.6 453.80,465.6 453.80,478.6 453.02,478.6 453.02,470.7 452.25,470.7 452.25,467.9 451.47,467.9 451.47,468.3 450.70,468.3 450.70,468.7 449.92,468.7 449.92,472.2 449.15,472.2 449.15,469.6 448.37,469.6 448.37,468.4 447.60,468.4 447.60,468.8 446.82,468.8 446.82,468.0 446.05,468.0 446.05,468.5 445.27,468.5 445.27,468.0 444.50,468.0 444.50,466.8 443.72,466.8 443.72,474.1 442.95,474.1 442.95,477.0 442.17,477.0 442.17,465.5 441.40,465.5 441.40,465.1 440.62,465.1 440.62,473.5 439.85,473.5 439.85,471.8 439.07,471.8 439.07,476.4 438.30,476.4 438.30,468.8 437.52,468.8 437.52,468.8 436.75,468.8 436.75,467.5 435.97,467.5 435.97,465.8 435.20,465.8 435.20,466.8 434.42,466.8 434.42,468.3 433.65,468.3 433.65,465.5 432.87,465.5 432.87,466.1 432.10,466.1 432.10,468.1 431.32,468.1 431.32,468.0 430.55,468.0 430.55,467.5 429.77,467.5 429.77,469.4 429.00,469.4 429.00,468.4 428.22,468.4 428.22,465.4 427.45,465.4 427.45,474.4 426.67,474.4 426.67,465.6 425.90,465.6 425.90,466.2 425.12,466.2 425.12,466.9 424.35,466.9 424.35,481.7 423.57,481.7 423.57,471.0 422.80,471.0 422.80,470.5 422.02,470.5 422.02,473.1 421.25,473.1 421.25,473.0 420.47,473.0 420.47,467.8 419.70,467.8 419.70,468.3 418.92,468.3 418.92,463.2 418.15,463.2 418.15,469.0 417.37,469.0 417.37,473.9 416.60,473.9 416.60,464.3 415.82,464.3 415.82,467.7 415.05,467.7 415.05,469.7 414.27,469.7 414.27,472.4 413.50,472.4 413.50,470.8 412.72,470.8 412.72,474.0 411.95,474.0 411.95,466.6 411.17,466.6 411.17,471.9 410.40,471.9 410.40,471.9 409.62,471.9 409.62,471.5 408.85,471.5 408.85,468.5 408.07,468.5 408.07,471.7 407.30,471.7 407.30,467.9 406.52,467.9 406.52,473.9 405.75,473.9 405.75,468.6 404.97,468.6 404.97,466.0 404.20,466.0 404.20,469.5 403.42,469.5 403.42,466.7 402.65,466.7 402.65,466.8 401.87,466.8 401.87,466.7 401.10,466.7 401.10,467.6 400.32,467.6 400.32,466.9 399.55,466.9 399.55,472.5 398.77,472.5 398.77,466.0 398.00,466.0 398.00,469.7 397.22,469.7 397.22,464.8 396.45,464.8 396.45,464.7 395.67,464.7 395.67,468.9 394.90,468.9 394.90,467.1 394.12,467.1 394.12,474.2 393.35,474.2 393.35,467.5 392.57,467.5 392.57,467.8 391.80,467.8 391.80,468.0 391.02,468.0 391.02,465.3 390.25,465.3 390.25,469.3 389.47,469.3 389.47,468.6 388.70,468.6 388.70,467.9 387.92,467.9 387.92,475.3 387.15,475.3 387.15,468.4 386.37,468.4 386.37,469.0 385.60,469.0 385.60,468.9 384.82,468.9 384.82,472.9 384.05,472.9 384.05,472.2 383.27,472.2 383.27,471.5 382.50,471.5 382.50,472.2 381.72,472.2 381.72,472.3 380.95,472.3 380.95,467.6 380.17,467.6 380.17,468.1 379.40,468.1 379.40,470.3 378.62,470.3 378.62,470.7 377.85,470.7 377.85,467.7 377.07,467.7 377.07,469.6 376.30,469.6 376.30,467.0 375.52,467.0 375.52,469.6 374.75,469.6 374.75,465.9 373.97,465.9 373.97,471.2 373.20,471.2 373.20,468.7 372.42,468.7 372.42,468.9 371.65,468.9 371.65,474.2 370.87,474.2 370.87,481.2 370.10,481.2 370.10,469.7 369.32,469.7 369.32,470.4 368.55,470.4 368.55,476.0 367.77,476.0 367.77,469.8 367.00,469.8 367.00,466.8 366.22,466.8 366.22,467.1 365.45,467.1 365.45,471.5 364.67,471.5 364.67,472.2 363.90,472.2 363.90,465.0 363.12,465.0 363.12,468.6 362.35,468.6 362.35,467.9 361.57,467.9 361.57,467.6 360.80,467.6 360.80,467.5 360.02,467.5 360.02,466.9 359.25,466.9 359.25,473.5 358.47,473.5 358.47,468.7 357.70,468.7 357.70,476.5 356.92,476.5 356.92,468.0 356.15,468.0 356.15,468.2 355.37,468.2 355.37,465.0 354.60,465.0 354.60,468.2 353.82,468.2 353.82,473.3 353.05,473.3 353.05,469.3 352.27,469.3 352.27,472.2 351.50,472.2 351.50,467.0 350.72,467.0 350.72,471.0 349.95,471.0 349.95,477.3 349.17,477.3 349.17,473.5 348.40,473.5 348.40,469.0 347.62,469.0 347.62,469.4 346.85,469.4 346.85,470.3 346.07,470.3 346.07,468.5 345.30,468.5 345.30,471.1 344.52,471.1 344.52,468.2 343.75,468.2 343.75,465.8 342.97,465.8 342.97,468.4 342.20,468.4 342.20,467.9 341.42,467.9 341.42,474.4 340.65,474.4 340.65,474.6 339.87,474.6 339.87,466.0 339.10,466.0 339.10,471.5 338.32,471.5 338.32,468.6 337.55,468.6 337.55,466.7 336.77,466.7 336.77,471.6 336.00,471.6 336.00,465.9 335.22,465.9 335.22,470.7 334.45,470.7 334.45,466.1 333.67,466.1 333.67,474.6 332.90,474.6 332.90,466.9 332.12,466.9 332.12,465.5 331.35,465.5 331.35,473.4 330.57,473.4 330.57,469.5 329.80,469.5 329.80,476.9 329.02,476.9 329.02,472.4 328.25,472.4 328.25,471.9 327.47,471.9 327.47,467.9 326.70,467.9 326.70,469.0 325.92,469.0 325.92,469.1 325.15,469.1 325.15,467.3 324.37,467.3 324.37,476.8 323.60,476.8 323.60,469.5 322.82,469.5 322.82,469.2 322.05,469.2 322.05,466.9 321.27,466.9 321.27,469.9 320.50,469.9 320.50,468.2 319.72,468.2 319.72,471.6 318.95,471.6 318.95,472.8 318.17,472.8 318.17,473.3 317.40,473.3 317.40,464.9 316.62,464.9 316.62,468.5 315.85,468.5 315.85,466.4 315.07,466.4 315.07,471.8 314.30,471.8 314.30,467.4 313.52,467.4 313.52,469.1 312.75,469.1 312.75,469.6 311.97,469.6 311.97,467.4 311.20,467.4 311.20,469.0 310.42,469.0 310.42,469.7 309.65,469.7 309.65,468.6 308.87,468.6 308.87,472.3 308.10,472.3 308.10,467.5 307.32,467.5 307.32,466.1 306.55,466.1 306.55,467.7 305.77,467.7 305.77,469.3 305.00,469.3 305.00,468.7 304.22,468.7 304.22,470.5 303.45,470.5 303.45,480.1 302.67,480.1 302.67,472.0 301.90,472.0 301.90,469.3 301.12,469.3 301.12,469.6 300.35,469.6 300.35,467.0 299.57,467.0 299.57,469.9 298.80,469.9 298.80,468.2 298.02,468.2 298.02,465.9 297.25,465.9 297.25,469.3 296.47,469.3 296.47,466.7 295.70,466.7 295.70,469.7 294.92,469.7 294.92,466.3 294.15,466.3 294.15,468.4 293.37,468.4 293.37,466.6 292.60,466.6 292.60,471.1 291.82,471.1 291.82,468.6 291.05,468.6 291.05,472.7 290.27,472.7 290.27,467.8 289.50,467.8 289.50,472.0 288.72,472.0 288.72,467.9 287.95,467.9 287.95,468.2 287.17,468.2 287.17,469.6 286.40,469.6 286.40,468.8 285.62,468.8 285.62,469.4 284.85,469.4 284.85,468.8 284.07,468.8 284.07,467.5 283.30,467.5 283.30,468.0 282.52,468.0 282.52,467.4 281.75,467.4 281.75,473.8 280.97,473.8 280.97,471.0 280.20,471.0 280.20,465.6 279.42,465.6 279.42,468.9 278.65,468.9 278.65,469.4 277.87,469.4 277.87,467.2 277.10,467.2 277.10,468.6 276.32,468.6 276.32,471.6 275.55,471.6 275.55,469.9 274.77,469.9 274.77,470.7 274.00,470.7 274.00,467.1 273.22,467.1 273.22,474.4 272.45,474.4 272.45,469.2 271.67,469.2 271.67,468.1 270.90,468.1 270.90,467.5 270.12,467.5 270.12,466.3 269.35,466.3 269.35,470.6 268.57,470.6 268.57,469.0 267.80,469.0 267.80,466.2 267.02,466.2 267.02,473.3 266.25,473.3 266.25,467.6 265.47,467.6 265.47,468.4 264.70,468.4 264.70,468.0 263.92,468.0 263.92,465.9 263.15,465.9 263.15,466.9 262.37,466.9 262.37,472.6 261.60,472.6 261.60,468.3 260.82,468.3 260.82,468.0 260.05,468.0 260.05,469.3 259.27,469.3 259.27,468.9 258.50,468.9 258.50,466.4 257.72,466.4 257.72,475.0 256.95,475.0 256.95,472.3 256.17,472.3 256.17,468.5 255.40,468.5 255.40,469.2 254.62,469.2 254.62,469.2 253.85,469.2 253.85,469.5 253.07,469.5 253.07,470.6 252.30,470.6 252.30,467.3 251.52,467.3 251.52,480.7 250.75,480.7 250.75,473.1 249.97,473.1 249.97,471.5 249.20,471.5 249.20,469.9 248.42,469.9 248.42,472.2 247.65,472.2 247.65,473.1 246.87,473.1 246.87,470.3 246.10,470.3 246.10,475.2 245.32,475.2 245.32,471.4 244.55,471.4 244.55,468.5 243.77,468.5 243.77,465.2 243.00,465.2 243.00,475.4 242.22,475.4 242.22,466.4 241.45,466.4 241.45,469.9 240.67,469.9 240.67,468.7 239.90,468.7 239.90,466.1 239.12,466.1 239.12,471.2 238.35,471.2 238.35,465.6 237.57,465.6 237.57,467.4 236.80,467.4 236.80,467.2 236.02,467.2 236.02,470.9 235.25,470.9 235.25,470.1 234.47,470.1 234.47,465.3 233.70,465.3 233.70,466.4 232.92,466.4 232.92,470.3 232.15,470.3 232.15,467.1 231.37,467.1 231.37,472.0 230.60,472.0 230.60,474.0 229.82,474.0 229.82,467.8 229.05,467.8 229.05,469.8 228.27,469.8 228.27,469.5 227.50,469.5 227.50,475.7 226.72,475.7 226.72,471.6 225.95,471.6 225.95,468.9 225.17,468.9 225.17,469.5 224.40,469.5 224.40,464.0 223.62,464.0 223.62,470.0 222.85,470.0 222.85,473.0 222.07,473.0 222.07,467.5 221.30,467.5 221.30,485.3 220.52,485.3 220.52,468.9 219.75,468.9 219.75,467.9 218.97,467.9 218.97,470.2 218.20,470.2 218.20,468.2 217.42,468.2 217.42,470.1 216.65,470.1 216.65,468.0 215.87,468.0 215.87,470.1 215.10,470.1 215.10,466.3 214.32,466.3 214.32,469.9 213.55,469.9 213.55,469.7 212.77,469.7 212.77,472.8 212.00,472.8 212.00,466.9 211.22,466.9 211.22,469.4 210.45,469.4 210.45,471.6 209.67,471.6 209.67,467.1 208.90,467.1 208.90,470.0 208.12,470.0 208.12,468.4 207.35,468.4 207.35,469.5 206.57,469.5 206.57,476.4 205.80,476.4 205.80,470.4 205.02,470.4 205.02,467.9 204.25,467.9 204.25,468.5 203.47,468.5 203.47,471.6 202.70,471.6 202.70,469.8 201.92,469.8 201.92,470.8 201.15,470.8 201.15,474.0 200.37,474.0 200.37,468.7 199.60,468.7 199.60,466.6 198.82,466.6 198.82,469.9 198.05,469.9 198.05,473.4 197.27,473.4 197.27,467.9 196.50,467.9 196.50,472.8 195.72,472.8 195.72,473.0 194.95,473.0 194.95,471.5 194.17,471.5 194.17,467.4 193.40,467.4 193.40,471.1 192.62,471.1 192.62,473.0 191.85,473.0 191.85,471.1 191.07,471.1 191.07,466.6 190.30,466.6 190.30,468.4 189.52,468.4 189.52,470.7 188.75,470.7 188.75,471.2 187.97,471.2 187.97,473.2 187.20,473.2 187.20,472.4 186.42,472.4 186.42,468.9 185.65,468.9 185.65,470.8 184.87,470.8 184.87,469.3 184.10,469.3 184.10,468.5 183.32,468.5 183.32,470.3 182.55,470.3 182.55,472.2 181.77,472.2 181.77,469.4 181.00,469.4 181.00,468.6 180.22,468.6 180.22,470.7 179.45,470.7 179.45,470.0 178.67,470.0 178.67,471.8 177.90,471.8 177.90,467.9 177.12,467.9 177.12,471.8 176.35,471.8 176.35,467.0 175.57,467.0 175.57,466.9 174.80,466.9 174.80,474.7 174.02,474.7 174.02,472.5 173.25,472.5 173.25,472.2 172.47,472.2 172.47,467.6 171.70,467.6 171.70,471.9 170.92,471.9 170.92,466.4 170.15,466.4 170.15,472.5 169.37,472.5 169.37,470.8 168.60,470.8 168.60,470.9 167.82,470.9 167.82,479.8 167.05,479.8 167.05,469.5 166.27,469.5 166.27,467.0 165.50,467.0 165.50,468.9 164.72,468.9 164.72,476.0 163.95,476.0 163.95,476.3 163.17,476.3 163.17,469.5 162.40,469.5 162.40,468.3 161.62,468.3 161.62,468.3 160.85,468.3 160.85,469.3 160.07,469.3 160.07,470.6 159.30,470.6 159.30,470.9 158.52,470.9 158.52,475.9 157.75,475.9 157.75,466.6 156.97,466.6 156.97,471.5 156.20,471.5 156.20,473.3 155.42,473.3 155.42,471.1 154.65,471.1 154.65,470.2 153.87,470.2 153.87,472.5 153.10,472.5 153.10,471.4 152.32,471.4 152.32,470.8 151.55,470.8 151.55,477.0 150.77,477.0 150.77,464.1 150.00,464.1 150.00,468.2 149.22,468.2 149.22,473.7 148.45,473.7 148.45,466.8 147.67,466.8 147.67,469.2 146.90,469.2 146.90,470.4 146.12,470.4 146.12,469.3 145.35,469.3 145.35,471.2 144.57,471.2 144.57,469.7 143.80,469.7 143.80,468.7 143.02,468.7 143.02,468.9 142.25,468.9 142.25,469.6 141.47,469.6 141.47,465.7 140.70,465.7 140.70,469.9 139.92,469.9 139.92,471.4 139.15,471.4 139.15,468.2 138.37,468.2 138.37,472.2 137.60,472.2 137.60,469.8 136.82,469.8 136.82,468.2 136.05,468.2 136.05,470.9 135.27,470.9 135.27,477.5 134.50,477.5 134.50,480.4 133.72,480.4 133.72,468.0 132.95,468.0 132.95,468.2 132.17,468.2 132.17,468.1 131.40,468.1 131.40,467.8 130.62,467.8 130.62,471.1 129.85,471.1 129.85,477.5 129.07,477.5 129.07,471.3 128.30,471.3 128.30,475.4 127.52,475.4 127.52,472.6 126.75,472.6 126.75,467.9 125.97,467.9 125.97,469.5 125.20,469.5 125.20,468.0 124.42,468.0 124.42,474.0 123.65,474.0 123.65,471.5 122.87,471.5 122.87,472.9 122.10,472.9 122.10,471.8 121.32,471.8 121.32,472.8 120.55,472.8 120.55,470.0 119.77,470.0 119.77,476.3 119.00,476.3 119.00,473.0 118.22,473.0 118.22,477.6 117.45,477.6 117.45,473.3 116.67,473.3 116.67,467.5 115.90,467.5 115.90,470.8 115.12,470.8 115.12,473.3 114.35,473.3 114.35,474.0 113.57,474.0 113.57,476.4 112.80,476.4 112.80,473.8 112.02,473.8 112.02,472.4 111.25,472.4 111.25,471.5 110.47,471.5 110.47,470.7 109.70,470.7 109.70,467.2 108.92,467.2 108.92,469.5 108.15,469.5 108.15,473.7 107.37,473.7 107.37,469.9 106.60,469.9 106.60,467.0 105.82,467.0 105.82,467.5 105.05,467.5 105.05,467.5 104.27,467.5 104.27,473.0 103.50,473.0 103.50,466.9 102.72,466.9 102.72,467.2 101.95,467.2 101.95,467.1 101.17,467.1 101.17,470.5 100.40,470.5 100.40,461.1 99.62,461.1 99.62,466.8 98.85,466.8 98.85,461.8 98.07,461.8 98.07,469.5 97.30,469.5 97.30,470.2 96.52,470.2 96.52,463.1 95.75,463.1 95.75,467.3 94.97,467.3 94.97,465.1 94.20,465.1 94.20,463.6 93.42,463.6 93.42,458.0 92.65,458.0 92.65,460.9 91.87,460.9 91.87,462.9 91.10,462.9 91.10,460.7 90.32,460.7 90.32,462.3 89.55,462.3 89.55,467.0 88.77,467.0 88.77,458.6 88.00,458.6 88.00,461.9 87.22,461.9 87.22,457.5 86.45,457.5 86.45,458.4 85.67,458.4 85.67,456.7 84.90,456.7 84.90,463.3 84.12,463.3 84.12,459.4 83.35,459.4 83.35,460.6 82.57,460.6 82.57,461.3 81.80,461.3 81.80,460.9 81.02,460.9 81.02,466.7 80.25,466.7 80.25,463.1 79.47,463.1 79.47,473.4 78.70,473.4 78.70,456.6 77.92,456.6 77.92,463.1 77.15,463.1 77.15,457.7 76.37,457.7 76.37,454.2 75.60,454.2 75.60,461.4 74.82,461.4 74.82,459.5 74.05,459.5 74.05,462.7 73.27,462.7 73.27,455.7 72.50,455.7 72.50,462.4 71.72,462.4 71.72,456.2 70.95,456.2 70.95,461.9 70.17,461.9 70.17,458.3 69.40,458.3 69.40,459.6 68.62,459.6 68.62,460.3 67.85,460.3 67.85,458.2 67.07,458.2 67.07,460.9 66.30,460.9 66.30,465.1 65.52,465.1 65.52,461.2 64.75,461.2 64.75,461.4 63.97,461.4 63.97,459.1 63.20,459.1 63.20,459.6 62.42,459.6 62.42,455.9 61.65,455.9 61.65,458.8 60.87,458.8 60.87,465.2 60.10,465.2 60.10,459.0 59.32,459.0 59.32,456.0 58.55,456.0 58.55,463.7 57.77,463.7 57.77,456.7 57.00,456.7 57.00,457.2 56.22,457.2 56.22,463.5 55.45,463.5 55.45,459.8 54.67,459.8 54.67,465.3 53.90,465.3 53.90,462.6 53.12,462.6 53.12,460.3 52.35,460.3 52.35,460.9 51.57,460.9 51.57,462.5 50.80,462.5 50.80,465.7 50.02,465.7 50.02,457.1 49.25,457.1 49.25,462.8 48.47,462.8 48.47,459.4 47.70,459.4 47.70,458.5 46.92,458.5 46.92,459.1 46.15,459.1 46.15,463.9 45.37,463.9 45.37,461.4 44.60,461.4 44.60,459.0 43.82,459.0 43.82,457.5 43.05,457.5 43.05,465.4 42.27,465.4 42.27,461.8 41.50,461.8 41.50,466.6 40.72,466.6 40.72,467.5 39.95,467.5 39.95,465.0 39.17,465.0 39.17,463.2 38.40,463.2 38.40,463.6 37.62,463.6 37.62,469.5 36.85,469.5 36.85,468.4 36.07,468.4 36.07,473.2 35.30,473.2Z" fill="#fff"/>
 <path d="M9.8 37.6 L14 36.6 L19.6 39.2 L27.6 35.9 L25.2 42 L24.6 44.6 L21.6 46.6 L18.2 47.4 L14.2 53.2 L15.2 45.2 L12.8 41.4 Z" fill="#1f76c4"/>
 <path d="M20.8 39.8 L25.6 37.5 L23 41.4 Z" fill="#a8dcf6"/>
</svg>
<div class="t" style="left:20.30px;top:3.76px;font-size:9px;line-height:9px;transform:scaleX(0.8440);color:#202020;-webkit-text-stroke:0;">1 : RFSA Soft Front Panel - RFSA</div>
<div class="t" style="left:4.70px;top:19.35px;font-size:8.6px;line-height:8.6px;transform:scaleX(0.8299);color:#202020;-webkit-text-stroke:0;">File</div>
<div class="a" style="left:5px;top:26.4px;width:4.5px;height:1px;background:#666"></div>
<div class="t" style="left:24.20px;top:19.35px;font-size:8.6px;line-height:8.6px;transform:scaleX(0.8435);color:#202020;-webkit-text-stroke:0;">Edit</div>
<div class="a" style="left:24.5px;top:26.4px;width:5.0px;height:1px;background:#666"></div>
<div class="t" style="left:44.70px;top:19.35px;font-size:8.6px;line-height:8.6px;transform:scaleX(0.8664);color:#202020;-webkit-text-stroke:0;">Window</div>
<div class="a" style="left:45px;top:26.4px;width:8.5px;height:1px;background:#666"></div>
<div class="t" style="left:79.20px;top:19.35px;font-size:8.6px;line-height:8.6px;transform:scaleX(0.8481);color:#202020;-webkit-text-stroke:0;">Help</div>
<div class="a" style="left:79.5px;top:26.4px;width:6.0px;height:1px;background:#666"></div>
<div class="t" style="left:17.40px;top:58.26px;font-size:9px;line-height:9px;transform:scaleX(0.7728);color:#e6e6e6;-webkit-text-stroke:0;">dBm</div>
<div class="t" style="left:18.20px;top:100.16px;font-size:9px;line-height:9px;transform:scaleX(0.8996);color:#e6e6e6;-webkit-text-stroke:0;">-10</div>
<div class="t" style="left:18.20px;top:143.16px;font-size:9px;line-height:9px;transform:scaleX(0.8996);color:#e6e6e6;-webkit-text-stroke:0;">-20</div>
<div class="t" style="left:18.20px;top:186.16px;font-size:9px;line-height:9px;transform:scaleX(0.8996);color:#e6e6e6;-webkit-text-stroke:0;">-30</div>
<div class="t" style="left:18.20px;top:229.16px;font-size:9px;line-height:9px;transform:scaleX(0.8996);color:#e6e6e6;-webkit-text-stroke:0;">-40</div>
<div class="t" style="left:18.20px;top:272.16px;font-size:9px;line-height:9px;transform:scaleX(0.8996);color:#e6e6e6;-webkit-text-stroke:0;">-50</div>
<div class="t" style="left:18.20px;top:315.16px;font-size:9px;line-height:9px;transform:scaleX(0.8996);color:#e6e6e6;-webkit-text-stroke:0;">-60</div>
<div class="t" style="left:18.20px;top:358.16px;font-size:9px;line-height:9px;transform:scaleX(0.8996);color:#e6e6e6;-webkit-text-stroke:0;">-70</div>
<div class="t" style="left:18.20px;top:401.16px;font-size:9px;line-height:9px;transform:scaleX(0.8996);color:#e6e6e6;-webkit-text-stroke:0;">-80</div>
<div class="t" style="left:18.20px;top:444.16px;font-size:9px;line-height:9px;transform:scaleX(0.8996);color:#e6e6e6;-webkit-text-stroke:0;">-90</div>
<div class="t" style="left:14.20px;top:487.16px;font-size:9px;line-height:9px;transform:scaleX(0.8717);color:#e6e6e6;-webkit-text-stroke:0;">-100</div>
<div class="t" style="left:22.94px;top:496.86px;font-size:9px;line-height:9px;transform:scaleX(0.8513);color:#e6e6e6;-webkit-text-stroke:0;">-6.98G</div>
<div class="t" style="left:92.24px;top:496.86px;font-size:9px;line-height:9px;transform:scaleX(0.8513);color:#e6e6e6;-webkit-text-stroke:0;">-5.58G</div>
<div class="t" style="left:161.54px;top:496.86px;font-size:9px;line-height:9px;transform:scaleX(0.8513);color:#e6e6e6;-webkit-text-stroke:0;">-4.19G</div>
<div class="t" style="left:230.84px;top:496.86px;font-size:9px;line-height:9px;transform:scaleX(0.8513);color:#e6e6e6;-webkit-text-stroke:0;">-2.79G</div>
<div class="t" style="left:302.05px;top:496.86px;font-size:9px;line-height:9px;transform:scaleX(0.8708);color:#e6e6e6;-webkit-text-stroke:0;">-1.4G</div>
<div class="t" style="left:378.65px;top:496.86px;font-size:9px;line-height:9px;color:#e6e6e6;-webkit-text-stroke:0;">0</div>
<div class="t" style="left:442.56px;top:496.86px;font-size:9px;line-height:9px;transform:scaleX(0.8088);color:#e6e6e6;-webkit-text-stroke:0;">1.4G</div>
<div class="t" style="left:509.95px;top:496.86px;font-size:9px;line-height:9px;transform:scaleX(0.7995);color:#e6e6e6;-webkit-text-stroke:0;">2.79G</div>
<div class="t" style="left:579.25px;top:496.86px;font-size:9px;line-height:9px;transform:scaleX(0.7995);color:#e6e6e6;-webkit-text-stroke:0;">4.19G</div>
<div class="t" style="left:648.55px;top:496.86px;font-size:9px;line-height:9px;transform:scaleX(0.7995);color:#e6e6e6;-webkit-text-stroke:0;">5.58G</div>
<div class="t" style="left:715.35px;top:496.86px;font-size:9px;line-height:9px;transform:scaleX(0.7995);color:#e6e6e6;-webkit-text-stroke:0;">6.98G</div>
<div class="t" style="left:88.20px;top:39.57px;font-size:9.6px;line-height:9.6px;transform:scaleX(0.9015);color:#d4d4d4;-webkit-text-stroke:0;">PXIe-5665 (14GHz)</div>
<div class="t" style="left:28.70px;top:35.93px;font-size:7px;line-height:7px;transform:scaleX(1.1251);color:#fff;-webkit-text-stroke:0;font-weight:bold;">NATIONAL</div>
<div class="t" style="left:26.10px;top:42.74px;font-size:8px;line-height:8px;transform:scaleX(0.9450);color:#fff;-webkit-text-stroke:0;font-weight:bold;">INSTRUMENTS</div>
<div class="t" style="left:661.60px;top:36.80px;font-size:8.5px;line-height:8.5px;transform:scaleX(0.8780);color:#dcdcdc;-webkit-text-stroke:0;">Ref lvl: 0.0dBm</div>
<div class="t" style="left:661.60px;top:47.80px;font-size:8.5px;line-height:8.5px;transform:scaleX(0.9256);color:#dcdcdc;-webkit-text-stroke:0;">Attn: 10.0dB</div>
<div id="sep" class="a"></div>
<div id="info" class="a"></div>
<div class="t" style="left:9.80px;top:520.80px;font-size:8.5px;line-height:8.5px;transform:scaleX(0.8786);color:#e8e8e8;-webkit-text-stroke:0;">Start Freq: 49.995978MHz</div>
<div class="t" style="left:132.30px;top:520.80px;font-size:8.5px;line-height:8.5px;transform:scaleX(0.8744);color:#e8e8e8;-webkit-text-stroke:0;">Stop Freq:</div>
<div class="t" style="left:9.80px;top:531.20px;font-size:8.5px;line-height:8.5px;transform:scaleX(0.8505);color:#e8e8e8;-webkit-text-stroke:0;">Avg Mode: RMS</div>
<div class="t" style="left:132.30px;top:531.20px;font-size:8.5px;line-height:8.5px;transform:scaleX(0.8902);color:#e8e8e8;-webkit-text-stroke:0;">Avg Weight: Moving Avg</div>
<div class="t" style="left:9.80px;top:541.50px;font-size:8.5px;line-height:8.5px;transform:scaleX(0.8580);color:#e8e8e8;-webkit-text-stroke:0;">RBW: 19.981kHz</div>
<div class="t" style="left:132.30px;top:541.50px;font-size:8.5px;line-height:8.5px;transform:scaleX(0.8572);color:#e8e8e8;-webkit-text-stroke:0;">RBW Type: 3dB</div>
<div class="t" style="left:9.80px;top:551.70px;font-size:8.5px;line-height:8.5px;transform:scaleX(0.8452);color:#e8e8e8;-webkit-text-stroke:0;">Preamp: Disabled</div>
<div class="t" style="left:132.30px;top:551.70px;font-size:8.5px;line-height:8.5px;transform:scaleX(0.8580);color:#e8e8e8;-webkit-text-stroke:0;">YTF: Enabled When In Path</div>
<div class="t" style="left:9.80px;top:561.90px;font-size:8.5px;line-height:8.5px;transform:scaleX(0.8612);color:#e8e8e8;-webkit-text-stroke:0;">IF Filter: 5MHz Wide</div>
<div class="t" style="left:132.30px;top:561.90px;font-size:8.5px;line-height:8.5px;transform:scaleX(0.8713);color:#e8e8e8;-webkit-text-stroke:0;">Sweep Time: 9.838s</div>
<div class="t" style="left:229.20px;top:531.20px;font-size:8.5px;line-height:8.5px;transform:scaleX(0.8992);color:#e8e8e8;-webkit-text-stroke:0;">Avgs: 10</div>
<div class="t" style="left:9.80px;top:578.10px;font-size:8.5px;line-height:8.5px;transform:scaleX(0.8675);color:#e8e8e8;-webkit-text-stroke:0;text-decoration:underline;">Measurement: None</div>
<div class="t" style="left:9.70px;top:605.20px;font-size:8.5px;line-height:8.5px;transform:scaleX(0.9003);color:#e8e8e8;-webkit-text-stroke:0;">Traces: 0-Write,</div>
<div class="t" style="left:65.90px;top:605.20px;font-size:8.5px;line-height:8.5px;transform:scaleX(0.8328);color:#e05a5a;-webkit-text-stroke:0;">1-Blank</div>
<div class="t" style="left:90.00px;top:605.20px;font-size:8.5px;line-height:8.5px;color:#e8e8e8;-webkit-text-stroke:0;">,</div>
<div class="t" style="left:94.20px;top:605.20px;font-size:8.5px;line-height:8.5px;transform:scaleX(0.8328);color:#5ccc5c;-webkit-text-stroke:0;">2-Blank</div>
<div class="t" style="left:118.90px;top:605.20px;font-size:8.5px;line-height:8.5px;color:#e8e8e8;-webkit-text-stroke:0;">,</div>
<div class="t" style="left:123.30px;top:605.20px;font-size:8.5px;line-height:8.5px;transform:scaleX(0.8571);color:#6a9ee6;-webkit-text-stroke:0;">3-Blank</div>
<div id="scroll" class="a">
 <svg class="a" style="left:0;top:0" width="11" height="98" viewBox="0 0 11 98">
  <path d="M3.5 7.5 L5.5 5 L7.5 7.5 Z" fill="#444"/>
  <rect x="1.5" y="16.5" width="8.5" height="65" rx="1.5" fill="url(#sg)" stroke="#a6a6a6"/>
  <path d="M4 46.5 H7.5 M4 48.5 H7.5 M4 50.5 H7.5" stroke="#666" stroke-width="0.8"/>
  <path d="M3.5 90.5 L5.5 93 L7.5 90.5 Z" fill="#444"/>
  <defs><linearGradient id="sg" x1="0" x2="1"><stop offset="0" stop-color="#ececec"/><stop offset="1" stop-color="#d4d4d4"/></linearGradient></defs>
 </svg>
</div>
<div id="panel" class="a"></div>
<div id="rframe" class="a"></div>
<div class="grp" style="left:753px;top:42.9px;width:104.0px;height:177.7px"></div><div class="glbg" style="left:759px;top:37.9px;width:35.7px;height:10px"></div><div class="t" style="left:760.70px;top:38.60px;font-size:8.5px;line-height:8.5px;transform:scaleX(0.8519);">Amplitude</div>
<div class="t" style="left:760.70px;top:53.10px;font-size:8.5px;line-height:8.5px;transform:scaleX(0.8365);">Units</div>
<div class="dd" style="left:760px;top:62.1px;width:89.0px;height:14.9px"></div><div class="ddb" style="left:835.5px;top:64.3px"></div><div class="t" style="left:791.00px;top:65.20px;font-size:8.5px;line-height:8.5px;transform:scaleX(0.7953);">dBm</div>
<div class="t" style="left:760.70px;top:85.10px;font-size:8.5px;line-height:8.5px;transform:scaleX(0.8669);">Reference level (dBm)</div>
<div class="inp" style="left:760px;top:94.5px;width:73.5px;height:13.0px"></div><div class="kp" style="left:833.7px;top:93.6px;width:14.6px;height:14.8px"><svg width="15" height="15" style="position:absolute;left:-1px;top:-1px"><g fill="#0a0a0a"><rect x="3.20" y="2.05" width="1.8" height="1.7"/><rect x="6.10" y="2.05" width="1.8" height="1.7"/><rect x="9.00" y="2.05" width="1.8" height="1.7"/><rect x="3.20" y="4.90" width="1.8" height="1.7"/><rect x="6.10" y="4.90" width="1.8" height="1.7"/><rect x="9.00" y="4.90" width="1.8" height="1.7"/><rect x="3.20" y="7.75" width="1.8" height="1.7"/><rect x="6.10" y="7.75" width="1.8" height="1.7"/><rect x="9.00" y="7.75" width="1.8" height="1.7"/><rect x="3.00" y="10.60" width="4.3" height="1.6"/><rect x="9.00" y="10.55" width="1.8" height="1.7"/></g></svg></div><div class="t" style="left:793.50px;top:96.60px;font-size:8.5px;line-height:8.5px;">0</div>
<div class="cb" style="left:759.7px;top:117.6px"></div>
<div class="t" style="left:770.50px;top:118.90px;font-size:8.5px;line-height:8.5px;transform:scaleX(0.8691);">Auto-scale</div>
<div class="t" style="left:770.70px;top:132.70px;font-size:8.5px;line-height:8.5px;transform:scaleX(0.9186);">dB/div</div>
<div class="inp" style="left:770px;top:143px;width:63.0px;height:13.0px"></div><div class="kp" style="left:833.7px;top:142.1px;width:14.6px;height:14.8px"><svg width="15" height="15" style="position:absolute;left:-1px;top:-1px"><g fill="#0a0a0a"><rect x="3.20" y="2.05" width="1.8" height="1.7"/><rect x="6.10" y="2.05" width="1.8" height="1.7"/><rect x="9.00" y="2.05" width="1.8" height="1.7"/><rect x="3.20" y="4.90" width="1.8" height="1.7"/><rect x="6.10" y="4.90" width="1.8" height="1.7"/><rect x="9.00" y="4.90" width="1.8" height="1.7"/><rect x="3.20" y="7.75" width="1.8" height="1.7"/><rect x="6.10" y="7.75" width="1.8" height="1.7"/><rect x="9.00" y="7.75" width="1.8" height="1.7"/><rect x="3.00" y="10.60" width="4.3" height="1.6"/><rect x="9.00" y="10.55" width="1.8" height="1.7"/></g></svg></div><div class="t" style="left:797.20px;top:145.10px;font-size:8.5px;line-height:8.5px;transform:scaleX(0.8991);">10</div>
<div class="cb" style="left:759.7px;top:162.9px"></div><svg class="a" style="left:759.7px;top:161.9px" width="10" height="10"><path d="M2.4 4.8 L4.1 7.6 L7.6 1.6" stroke="#2c3c8c" stroke-width="1.25" fill="none"/></svg>
<div class="t" style="left:770.70px;top:164.10px;font-size:8.5px;line-height:8.5px;transform:scaleX(0.9105);">Auto Attenuation</div>
<div class="t" style="left:771.40px;top:178.10px;font-size:8.5px;line-height:8.5px;transform:scaleX(0.9134);color:#9a9a9a;">Attenuation (dB)</div>
<div class="inp dis" style="left:770px;top:187.4px;width:63.0px;height:13.4px"></div><div class="kp" style="left:833.7px;top:186.5px;width:14.6px;height:14.8px"><svg width="15" height="15" style="position:absolute;left:-1px;top:-1px"><g fill="#0a0a0a"><rect x="3.20" y="2.05" width="1.8" height="1.7"/><rect x="6.10" y="2.05" width="1.8" height="1.7"/><rect x="9.00" y="2.05" width="1.8" height="1.7"/><rect x="3.20" y="4.90" width="1.8" height="1.7"/><rect x="6.10" y="4.90" width="1.8" height="1.7"/><rect x="9.00" y="4.90" width="1.8" height="1.7"/><rect x="3.20" y="7.75" width="1.8" height="1.7"/><rect x="6.10" y="7.75" width="1.8" height="1.7"/><rect x="9.00" y="7.75" width="1.8" height="1.7"/><rect x="3.00" y="10.60" width="4.3" height="1.6"/><rect x="9.00" y="10.55" width="1.8" height="1.7"/></g></svg></div><div class="t" style="left:797.20px;top:189.70px;font-size:8.5px;line-height:8.5px;transform:scaleX(0.8991);color:#8a8a8a;">10</div>
<div class="cb" style="left:759.7px;top:205.9px"></div>
<div class="t" style="left:770.70px;top:206.80px;font-size:8.5px;line-height:8.5px;transform:scaleX(0.8603);">Power Spectral Density</div>
<div class="grp" style="left:866px;top:42.9px;width:117.0px;height:177.7px"></div><div class="glbg" style="left:872.2px;top:37.9px;width:92.1px;height:10px"></div><div class="t" style="left:873.90px;top:38.60px;font-size:8.5px;line-height:8.5px;transform:scaleX(0.8777);">Resolution BW / Averaging</div>
<div class="cb" style="left:873.1px;top:53.6px"></div>
<div class="t" style="left:884.00px;top:54.90px;font-size:8.5px;line-height:8.5px;transform:scaleX(0.8572);">Auto Resolution BW</div>
<div class="t" style="left:884.30px;top:69.50px;font-size:8.5px;line-height:8.5px;transform:scaleX(0.8315);">RBW (Hz)</div>
<div class="inp" style="left:883.5px;top:78.6px;width:75.3px;height:12.9px"></div><div class="kp" style="left:959.3px;top:77.7px;width:14.6px;height:14.8px"><svg width="15" height="15" style="position:absolute;left:-1px;top:-1px"><g fill="#0a0a0a"><rect x="3.20" y="2.05" width="1.8" height="1.7"/><rect x="6.10" y="2.05" width="1.8" height="1.7"/><rect x="9.00" y="2.05" width="1.8" height="1.7"/><rect x="3.20" y="4.90" width="1.8" height="1.7"/><rect x="6.10" y="4.90" width="1.8" height="1.7"/><rect x="9.00" y="4.90" width="1.8" height="1.7"/><rect x="3.20" y="7.75" width="1.8" height="1.7"/><rect x="6.10" y="7.75" width="1.8" height="1.7"/><rect x="9.00" y="7.75" width="1.8" height="1.7"/><rect x="3.00" y="10.60" width="4.3" height="1.6"/><rect x="9.00" y="10.55" width="1.8" height="1.7"/></g></svg></div><div class="t" style="left:906.30px;top:80.65px;font-size:8.5px;line-height:8.5px;transform:scaleX(0.9125);">20.000k</div>
<div class="t" style="left:873.70px;top:102.10px;font-size:8.5px;line-height:8.5px;transform:scaleX(0.8708);">Resolution BW type</div>
<div class="dd" style="left:873.8px;top:110.8px;width:100.2px;height:13.9px"></div><div class="ddb" style="left:960.5px;top:113.0px"></div><div class="t" style="left:911.20px;top:113.40px;font-size:8.5px;line-height:8.5px;transform:scaleX(0.8596);">3dB</div>
<div class="t" style="left:873.70px;top:132.10px;font-size:8.5px;line-height:8.5px;transform:scaleX(0.8779);">Averaging mode</div>
<div class="dd" style="left:873.8px;top:140.79999999999998px;width:100.2px;height:13.9px"></div><div class="ddb" style="left:960.5px;top:143.0px"></div><div class="t" style="left:909.60px;top:143.40px;font-size:8.5px;line-height:8.5px;transform:scaleX(0.7994);">RMS</div>
<div class="t" style="left:873.70px;top:160.60px;font-size:8.5px;line-height:8.5px;transform:scaleX(0.8986);">Average weighting</div>
<div class="dd" style="left:873.8px;top:169.9px;width:100.2px;height:13.7px"></div><div class="ddb" style="left:960.5px;top:172.1px"></div><div class="t" style="left:877.50px;top:172.40px;font-size:8.5px;line-height:8.5px;transform:scaleX(0.8895);">Moving Average (linear)</div>
<div class="t" style="left:873.70px;top:189.10px;font-size:8.5px;line-height:8.5px;transform:scaleX(0.8844);">Number of averages</div>
<div class="inp" style="left:873.5px;top:199.2px;width:85.3px;height:13.4px"></div><div class="kp" style="left:959.3px;top:198.3px;width:14.6px;height:14.8px"><svg width="15" height="15" style="position:absolute;left:-1px;top:-1px"><g fill="#0a0a0a"><rect x="3.20" y="2.05" width="1.8" height="1.7"/><rect x="6.10" y="2.05" width="1.8" height="1.7"/><rect x="9.00" y="2.05" width="1.8" height="1.7"/><rect x="3.20" y="4.90" width="1.8" height="1.7"/><rect x="6.10" y="4.90" width="1.8" height="1.7"/><rect x="9.00" y="4.90" width="1.8" height="1.7"/><rect x="3.20" y="7.75" width="1.8" height="1.7"/><rect x="6.10" y="7.75" width="1.8" height="1.7"/><rect x="9.00" y="7.75" width="1.8" height="1.7"/><rect x="3.00" y="10.60" width="4.3" height="1.6"/><rect x="9.00" y="10.55" width="1.8" height="1.7"/></g></svg></div><div class="t" style="left:911.30px;top:201.50px;font-size:8.5px;line-height:8.5px;transform:scaleX(0.9097);">10</div>
<div class="grp" style="left:753px;top:232.3px;width:103.6px;height:102.9px"></div><div class="glbg" style="left:758.8px;top:227.3px;width:38.7px;height:10px"></div><div class="t" style="left:760.50px;top:228.00px;font-size:8.5px;line-height:8.5px;transform:scaleX(0.8766);">Frequency</div>
<div class="t" style="left:760.50px;top:244.40px;font-size:8.5px;line-height:8.5px;transform:scaleX(0.8732);">Specification method</div>
<div class="dd" style="left:759.7px;top:253.1px;width:89.5px;height:14.5px"></div><div class="ddb" style="left:835.7px;top:255.3px"></div><div class="t" style="left:778.00px;top:256.00px;font-size:8.5px;line-height:8.5px;transform:scaleX(0.8925);">Start &amp; Stop</div>
<div class="t" style="left:760.50px;top:275.30px;font-size:8.5px;line-height:8.5px;transform:scaleX(0.9060);">Start frequency (Hz)</div>
<div class="inp" style="left:760px;top:285.5px;width:73.4px;height:13.3px"></div><div class="kp" style="left:833.7px;top:284.6px;width:14.6px;height:14.8px"><svg width="15" height="15" style="position:absolute;left:-1px;top:-1px"><g fill="#0a0a0a"><rect x="3.20" y="2.05" width="1.8" height="1.7"/><rect x="6.10" y="2.05" width="1.8" height="1.7"/><rect x="9.00" y="2.05" width="1.8" height="1.7"/><rect x="3.20" y="4.90" width="1.8" height="1.7"/><rect x="6.10" y="4.90" width="1.8" height="1.7"/><rect x="9.00" y="4.90" width="1.8" height="1.7"/><rect x="3.20" y="7.75" width="1.8" height="1.7"/><rect x="6.10" y="7.75" width="1.8" height="1.7"/><rect x="9.00" y="7.75" width="1.8" height="1.7"/><rect x="3.00" y="10.60" width="4.3" height="1.6"/><rect x="9.00" y="10.55" width="1.8" height="1.7"/></g></svg></div><div class="t" style="left:774.80px;top:287.75px;font-size:8.5px;line-height:8.5px;transform:scaleX(0.8888);">50.000000M</div>
<div class="t" style="left:760.50px;top:304.80px;font-size:8.5px;line-height:8.5px;transform:scaleX(0.8891);">Stop frequency (Hz)</div>
<div class="inp" style="left:760px;top:315px;width:73.4px;height:13.2px"></div><div class="kp" style="left:833.7px;top:314.1px;width:14.6px;height:14.8px"><svg width="15" height="15" style="position:absolute;left:-1px;top:-1px"><g fill="#0a0a0a"><rect x="3.20" y="2.05" width="1.8" height="1.7"/><rect x="6.10" y="2.05" width="1.8" height="1.7"/><rect x="9.00" y="2.05" width="1.8" height="1.7"/><rect x="3.20" y="4.90" width="1.8" height="1.7"/><rect x="6.10" y="4.90" width="1.8" height="1.7"/><rect x="9.00" y="4.90" width="1.8" height="1.7"/><rect x="3.20" y="7.75" width="1.8" height="1.7"/><rect x="6.10" y="7.75" width="1.8" height="1.7"/><rect x="9.00" y="7.75" width="1.8" height="1.7"/><rect x="3.00" y="10.60" width="4.3" height="1.6"/><rect x="9.00" y="10.55" width="1.8" height="1.7"/></g></svg></div><div class="t" style="left:770.00px;top:317.20px;font-size:8.5px;line-height:8.5px;transform:scaleX(0.8710);">14.000000000G</div>
<div class="btn" style="left:880px;top:231.2px;width:89.0px;height:16.5px"></div><div class="t" style="left:901.30px;top:235.40px;font-size:8.5px;line-height:8.5px;transform:scaleX(0.8547);">Traces / Run Mode</div><svg class="a" style="left:884px;top:233.5px" width="12" height="12" viewBox="0 0 12 12"><path d="M1 0.5 V10 M2.8 10 L4.2 2.5 L5.4 10 M5.8 10 L7.3 4.5 L8.6 10 M9 10 L10.2 6 L11.2 10" stroke="#000" stroke-width="1.1" fill="none"/><path d="M0.5 10.8 H11.5" stroke="#222" stroke-width="1.2" stroke-dasharray="1.2 0.8"/></svg>
<div class="btn" style="left:880px;top:256.7px;width:89.0px;height:16.3px"></div><div class="t" style="left:921.70px;top:260.80px;font-size:8.5px;line-height:8.5px;transform:scaleX(0.8634);">Markers</div><svg class="a" style="left:883.2px;top:259.8px" width="14" height="11" viewBox="0 0 14 11"><rect x="0" y="4.1" width="3.8" height="1.8" fill="#111"/><rect x="10.1" y="4.1" width="3.5" height="1.8" fill="#111"/><rect x="5.9" y="0.3" width="2" height="3" fill="#000"/><rect x="5.9" y="6.6" width="2" height="3.2" fill="#000"/></svg>
<div class="btn" style="left:880px;top:280.9px;width:89.0px;height:16.1px"></div><div class="t" style="left:910.70px;top:284.90px;font-size:8.5px;line-height:8.5px;transform:scaleX(0.8717);">Measurements</div><svg class="a" style="left:884.5px;top:284.5px" width="16" height="8" viewBox="0 0 16 8"><rect x="0.9" y="0.9" width="13.6" height="6" rx="1" fill="#f4f4f4" stroke="#2a2a2a" stroke-width="1.2"/><path d="M2.4 4.6 H13.2" stroke="#222" stroke-width="1.1" stroke-dasharray="1.3 0.9"/></svg>
<div class="btn" style="left:880px;top:306.0px;width:89.0px;height:15.8px"></div><div class="t" style="left:912.70px;top:309.85px;font-size:8.5px;line-height:8.5px;transform:scaleX(0.8752);">Preset</div>
<div class="btn" style="left:880px;top:330.5px;width:89.0px;height:16.2px"></div><div class="t" style="left:902.70px;top:334.55px;font-size:8.5px;line-height:8.5px;transform:scaleX(0.8529);">Switch Mode</div><svg class="a" style="left:954.6px;top:336px" width="11" height="8" viewBox="0 0 11 8"><path d="M1 1 H10 L5.5 6.5 Z" fill="#fafafa" stroke="#333" stroke-width="0.9"/></svg>
<div id="bot" class="a"></div>
<div class="a" style="left:745px;top:616px;width:243px;height:1px;background:#fff"></div>
</body></html>
